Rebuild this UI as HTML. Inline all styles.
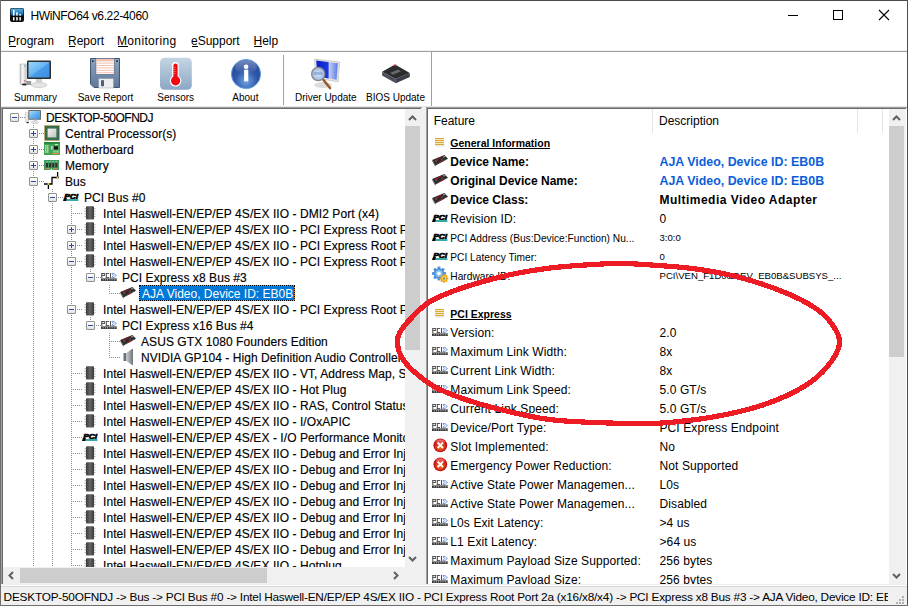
<!DOCTYPE html>
<html><head><meta charset="utf-8"><style>
html,body{margin:0;padding:0;}
body{width:908px;height:606px;overflow:hidden;position:relative;background:#fff;font-family:"Liberation Sans", sans-serif;}
.t{position:absolute;white-space:pre;font-family:"Liberation Sans", sans-serif;}
.r{position:absolute;}
svg.r{overflow:visible}
</style></head><body>
<div class="r" style="left:0px;top:0px;width:908px;height:606px;background:#fff"></div>
<svg class="r" style="left:10px;top:8px;" width="14" height="14" viewBox="0 0 14 14"><defs><linearGradient id="tg" x1="0" y1="0" x2="0" y2="1"><stop offset="0" stop-color="#5ab4e8"/><stop offset="1" stop-color="#0a5a98"/></linearGradient></defs>
<rect x="0" y="0" width="14" height="14" rx="2" fill="#0c0c0c"/>
<rect x="0.6" y="0.6" width="12.8" height="7" rx="1.5" fill="url(#tg)"/>
<rect x="3" y="2" width="1.5" height="5.6" fill="#fff"/><rect x="6.2" y="4.2" width="1.5" height="3.4" fill="#fff"/><rect x="9.4" y="5.8" width="1.5" height="1.8" fill="#fff"/>
<rect x="3" y="9" width="1.5" height="3.5" rx="0.5" fill="#fff"/><rect x="6.2" y="9" width="1.5" height="3.5" rx="0.5" fill="#fff"/><rect x="9.4" y="9" width="1.5" height="3.5" rx="0.5" fill="#fff"/></svg>
<div class="t" style="left:30.5px;top:8.03px;font-size:12px;line-height:16px;font-weight:normal;color:#000;letter-spacing:-0.38px">HWiNFO64 v6.22-4060</div>
<div class="r" style="left:788px;top:15px;width:10px;height:1px;background:#000"></div>
<div class="r" style="left:833px;top:10px;width:10px;height:10px;border:1px solid #000;box-sizing:border-box"></div>
<svg class="r" style="left:878px;top:9px;" width="12" height="12" viewBox="0 0 12 12"><path d="M1 1 L11 11 M11 1 L1 11" stroke="#000" stroke-width="1.1"/></svg>
<div class="t" style="left:8px;top:33.03px;font-size:12px;line-height:16px;font-weight:normal;color:#000;">Program</div>
<div class="r" style="left:8.5px;top:46px;width:7.5px;height:1px;background:#000"></div>
<div class="t" style="left:68px;top:33.03px;font-size:12px;line-height:16px;font-weight:normal;color:#000;">Report</div>
<div class="r" style="left:68.5px;top:46px;width:6.5px;height:1px;background:#000"></div>
<div class="t" style="left:117px;top:33.03px;font-size:12px;line-height:16px;font-weight:normal;color:#000;letter-spacing:0.35px">Monitoring</div>
<div class="r" style="left:117.5px;top:46px;width:10px;height:1px;background:#000"></div>
<div class="t" style="left:191px;top:33.03px;font-size:12px;line-height:16px;font-weight:normal;color:#000;">eSupport</div>
<div class="r" style="left:191.5px;top:46px;width:6.5px;height:1px;background:#000"></div>
<div class="t" style="left:253.5px;top:33.03px;font-size:12px;line-height:16px;font-weight:normal;color:#000;">Help</div>
<div class="r" style="left:254.0px;top:46px;width:7.5px;height:1px;background:#000"></div>
<div class="r" style="left:1px;top:50px;width:906px;height:1px;background:#f0f0f0"></div>
<div class="r" style="left:1px;top:51px;width:906px;height:1px;background:#a0a0a0"></div>
<div class="r" style="left:0px;top:0px;width:908px;height:1px;background:#4a4a4a"></div>
<div class="r" style="left:0px;top:0px;width:1px;height:606px;background:#6e6e6e"></div>
<div class="r" style="left:907px;top:0px;width:1px;height:606px;background:#4e4e52"></div>
<div class="r" style="left:0px;top:605px;width:908px;height:1px;background:#6e6e6e"></div>
<div class="r" style="left:1px;top:52px;width:906px;height:54px;background:#fff"></div>
<div class="r" style="left:283px;top:55px;width:1px;height:50px;background:#a0a0a0"></div>
<div class="r" style="left:431px;top:52px;width:1px;height:55px;background:#a0a0a0"></div>
<div class="t" style="left:-14.5px;width:100px;text-align:center;top:91.30px;font-size:10px;line-height:13px;color:#000">Summary</div>
<div class="t" style="left:55.5px;width:100px;text-align:center;top:91.30px;font-size:10px;line-height:13px;color:#000">Save Report</div>
<div class="t" style="left:125.69999999999999px;width:100px;text-align:center;top:91.30px;font-size:10px;line-height:13px;color:#000">Sensors</div>
<div class="t" style="left:195.4px;width:100px;text-align:center;top:91.30px;font-size:10px;line-height:13px;color:#000">About</div>
<div class="t" style="left:275.8px;width:100px;text-align:center;top:91.30px;font-size:10px;line-height:13px;color:#000">Driver Update</div>
<div class="t" style="left:345.5px;width:100px;text-align:center;top:91.30px;font-size:10px;line-height:13px;color:#000">BIOS Update</div>
<div class="r" style="left:1px;top:106px;width:906px;height:1px;background:#e4e4e4"></div>
<svg class="r" style="left:18px;top:56px;" width="36" height="34" viewBox="0 0 36 34"><defs>
<linearGradient id="sumscr" x1="0" y1="0" x2="1" y2="1"><stop offset="0" stop-color="#9ad6fb"/><stop offset="0.5" stop-color="#64b4f2"/><stop offset="0.52" stop-color="#4a9cea"/><stop offset="1" stop-color="#3b8ce0"/></linearGradient>
<linearGradient id="sumtw" x1="0" y1="0" x2="1" y2="0"><stop offset="0" stop-color="#bdbdbd"/><stop offset="0.4" stop-color="#f8f8f8"/><stop offset="1" stop-color="#c8c8c8"/></linearGradient>
</defs>
<rect x="2" y="8" width="6.2" height="20.2" fill="url(#sumtw)" stroke="#a8a8a8" stroke-width="0.5"/>
<ellipse cx="6.5" cy="28.5" rx="2.8" ry="1" fill="#222"/>
<rect x="6.5" y="9" width="0.8" height="2" fill="#40b0d0"/><rect x="6.5" y="24" width="0.8" height="2" fill="#d04040"/>
<rect x="8.2" y="25" width="5" height="4" fill="#9a9a9a"/>
<ellipse cx="21" cy="29" rx="7.8" ry="2.6" fill="#e4e4e4" stroke="#bdbdbd" stroke-width="0.6"/>
<rect x="18" y="22" width="6" height="5" fill="#d0d0d0"/>
<rect x="9" y="4.6" width="24" height="18.4" rx="0.8" fill="#2e2e2e"/>
<rect x="10.5" y="6" width="21" height="15.5" fill="url(#sumscr)"/></svg>
<svg class="r" style="left:88px;top:56px;" width="34" height="34" viewBox="0 0 34 34"><defs><linearGradient id="flb" x1="0" y1="0" x2="0" y2="1"><stop offset="0" stop-color="#8ea4c0"/><stop offset="1" stop-color="#5f7898"/></linearGradient></defs>
<path d="M2.5 2.5 H31.5 V31.5 H6 L2.5 28 Z" fill="url(#flb)" stroke="#3f5577" stroke-width="1"/>
<rect x="8" y="2.5" width="18.2" height="15.8" fill="#fff" stroke="#506480" stroke-width="0.6"/>
<g fill="#f4c2b0"><rect x="8.3" y="3" width="17.6" height="2.4"/><rect x="8.3" y="6.6" width="17.6" height="1"/><rect x="8.3" y="9" width="17.6" height="1"/><rect x="8.3" y="11.4" width="17.6" height="1"/><rect x="8.3" y="13.8" width="17.6" height="1"/><rect x="8.3" y="16.2" width="17.6" height="1"/></g>
<rect x="4" y="4.3" width="1.6" height="1.6" fill="#1a2430"/><rect x="28.2" y="4.3" width="1.6" height="1.6" fill="#1a2430"/>
<rect x="10.8" y="22.7" width="14.5" height="9.3" fill="#eeeeee" stroke="#9aa6b4" stroke-width="0.5"/>
<rect x="13" y="24.2" width="3" height="6" fill="#4a6088"/></svg>
<svg class="r" style="left:158px;top:56px;" width="36" height="36" viewBox="0 0 36 36"><defs><linearGradient id="sng" x1="0" y1="0" x2="0" y2="1"><stop offset="0" stop-color="#c6d5e3"/><stop offset="1" stop-color="#8ba8c6"/></linearGradient></defs>
<rect x="2" y="1.7" width="31.8" height="32" rx="4.5" fill="url(#sng)"/>
<rect x="14" y="6" width="6.8" height="19" rx="3.4" fill="#fff"/>
<circle cx="17.6" cy="24.8" r="5.8" fill="#fff"/>
<rect x="15.4" y="7.6" width="4.2" height="18" rx="2.1" fill="#ee0a10"/>
<circle cx="17.6" cy="24.8" r="4.6" fill="#ee0a10"/>
<g fill="#f87a7a"><rect x="16" y="11" width="1.5" height="0.8"/><rect x="16" y="13" width="1.5" height="0.8"/><rect x="16" y="15" width="1.5" height="0.8"/><rect x="16" y="17" width="1.5" height="0.8"/></g></svg>
<svg class="r" style="left:229px;top:57px;" width="34" height="34" viewBox="0 0 34 34"><defs><radialGradient id="abg" cx="0.5" cy="0.75" r="0.7"><stop offset="0" stop-color="#6ea6e6"/><stop offset="0.55" stop-color="#2f56a8"/><stop offset="1" stop-color="#2a4a9a"/></radialGradient>
<linearGradient id="abh" x1="0" y1="0" x2="0" y2="1"><stop offset="0" stop-color="#fff" stop-opacity="0.35"/><stop offset="1" stop-color="#fff" stop-opacity="0"/></linearGradient></defs>
<circle cx="17" cy="17" r="14.6" fill="url(#abg)" stroke="#5a9ee0" stroke-width="0.9"/>
<ellipse cx="17" cy="10" rx="11" ry="7" fill="url(#abh)"/>
<circle cx="17.1" cy="9.7" r="2.3" fill="#fff"/>
<rect x="15.1" y="12.7" width="4.2" height="11.6" fill="#fff"/></svg>
<svg class="r" style="left:304px;top:56px;" width="40" height="36" viewBox="0 0 40 36"><defs><linearGradient id="dus" x1="0" y1="0" x2="1" y2="0"><stop offset="0" stop-color="#0a1cc8"/><stop offset="0.55" stop-color="#1a3ae0"/><stop offset="0.6" stop-color="#c6d2f6"/><stop offset="1" stop-color="#5a78e8"/></linearGradient>
<radialGradient id="dul" cx="0.5" cy="0.5" r="0.5"><stop offset="0" stop-color="#dde8f8"/><stop offset="1" stop-color="#9cb8e0"/></radialGradient></defs>
<ellipse cx="19" cy="29" rx="9" ry="3" fill="#dcdcdc"/>
<path d="M10.5 3 L35.6 6 L34.2 25.8 L12 22.3 Z" fill="#e6e6de" stroke="#b8b8b0" stroke-width="0.6"/>
<path d="M12.2 4.6 L33.8 7.3 L32.6 23.8 L13.6 20.8 Z" fill="url(#dus)"/>
<path d="M19.5 24 L26 32" stroke="#9a5a28" stroke-width="2.6" stroke-linecap="round"/>
<circle cx="14.2" cy="18" r="6.6" fill="url(#dul)" stroke="#8a8a8a" stroke-width="1.3"/>
<rect x="9.5" y="16" width="9" height="3" fill="#7a9ad0" opacity="0.6"/></svg>
<svg class="r" style="left:380px;top:62px;" width="32" height="24" viewBox="0 0 32 24"><path d="M2.1 9.7 L15 2.6 L29.8 11 L15.8 17.1 Z" fill="#2c2c2e"/>
<path d="M2.1 9.7 L15.8 17.1 L15.8 21.3 L2.1 13.5 Z" fill="#4a4e58"/>
<path d="M15.8 17.1 L29.8 11 L29.8 15 L15.8 21.3 Z" fill="#3a3e48"/>
<circle cx="15" cy="3.6" r="1" fill="#d02020"/>
<path d="M10 11 L18 7.5 L21 9.2 L13 12.8 Z" fill="#6a6a6a"/></svg>
<div class="r" style="left:1px;top:107px;width:421px;height:1px;background:#a0a0a0"></div>
<div class="r" style="left:1px;top:107px;width:1px;height:478px;background:#a0a0a0"></div>
<div class="r" style="left:2px;top:108px;width:419px;height:1px;background:#6a6a6a"></div>
<div class="r" style="left:2px;top:108px;width:1px;height:477px;background:#6a6a6a"></div>
<div class="r" style="left:405px;top:109px;width:17px;height:458px;background:#f0f0f0"></div>
<div class="r" style="left:405px;top:126px;width:15px;height:224px;background:#cdcdcd"></div>
<svg class="r" style="left:408px;top:115px;" width="9" height="6" viewBox="0 0 9 6"><path d="M1 5 L4.5 1.5 L8 5" fill="none" stroke="#606060" stroke-width="2"/></svg>
<svg class="r" style="left:408px;top:556px;" width="9" height="6" viewBox="0 0 9 6"><path d="M1 1 L4.5 4.5 L8 1" fill="none" stroke="#606060" stroke-width="2"/></svg>
<div class="r" style="left:3px;top:567px;width:419px;height:18px;background:#f0f0f0"></div>
<div class="r" style="left:20px;top:568px;width:247px;height:15px;background:#cdcdcd"></div>
<svg class="r" style="left:8px;top:571px;" width="6" height="9" viewBox="0 0 6 9"><path d="M5 1 L1.5 4.5 L5 8" fill="none" stroke="#606060" stroke-width="2"/></svg>
<svg class="r" style="left:393px;top:571px;" width="6" height="9" viewBox="0 0 6 9"><path d="M1 1 L4.5 4.5 L1 8" fill="none" stroke="#606060" stroke-width="2"/></svg>
<div class="r" style="left:422px;top:107px;width:4px;height:478px;background:#f0f0f0"></div>
<div class="r" style="left:426px;top:107px;width:481px;height:1px;background:#a0a0a0"></div>
<div class="r" style="left:426px;top:107px;width:1px;height:478px;background:#a0a0a0"></div>
<div class="r" style="left:427px;top:108px;width:479px;height:1px;background:#6a6a6a"></div>
<div class="r" style="left:427px;top:108px;width:1px;height:477px;background:#6a6a6a"></div>
<div class="r" style="left:652px;top:109px;width:1px;height:24px;background:#e5e5e5"></div>
<div class="r" style="left:857px;top:109px;width:1px;height:24px;background:#e5e5e5"></div>
<div class="r" style="left:882px;top:109px;width:1px;height:24px;background:#e5e5e5"></div>
<div class="t" style="left:433.7px;top:113.03px;font-size:12px;line-height:16px;font-weight:normal;color:#000;">Feature</div>
<div class="t" style="left:659px;top:113.03px;font-size:12px;line-height:16px;font-weight:normal;color:#000;">Description</div>
<div class="r" style="left:889px;top:109px;width:17px;height:476px;background:#f0f0f0"></div>
<div class="r" style="left:889px;top:126px;width:15px;height:231px;background:#cdcdcd"></div>
<svg class="r" style="left:892px;top:115px;" width="9" height="6" viewBox="0 0 9 6"><path d="M1 5 L4.5 1.5 L8 5" fill="none" stroke="#606060" stroke-width="2"/></svg>
<svg class="r" style="left:892px;top:573px;" width="9" height="6" viewBox="0 0 9 6"><path d="M1 1 L4.5 4.5 L8 1" fill="none" stroke="#606060" stroke-width="2"/></svg>
<div class="r" style="left:3px;top:109px;width:402px;height:458px;overflow:hidden;background:#fff">
<div class="r" style="left:30px;top:14px;width:1px;height:444px;background:repeating-linear-gradient(to bottom,#8a8a8a 0 1px,transparent 1px 2px)"></div>
<div class="r" style="left:49px;top:80px;width:1px;height:378px;background:repeating-linear-gradient(to bottom,#8a8a8a 0 1px,transparent 1px 2px)"></div>
<div class="r" style="left:68px;top:96px;width:1px;height:362px;background:repeating-linear-gradient(to bottom,#8a8a8a 0 1px,transparent 1px 2px)"></div>
<div class="r" style="left:87px;top:160px;width:1px;height:8px;background:repeating-linear-gradient(to bottom,#8a8a8a 0 1px,transparent 1px 2px)"></div>
<div class="r" style="left:106px;top:176px;width:1px;height:8px;background:repeating-linear-gradient(to bottom,#8a8a8a 0 1px,transparent 1px 2px)"></div>
<div class="r" style="left:87px;top:208px;width:1px;height:8px;background:repeating-linear-gradient(to bottom,#8a8a8a 0 1px,transparent 1px 2px)"></div>
<div class="r" style="left:106px;top:224px;width:1px;height:24px;background:repeating-linear-gradient(to bottom,#8a8a8a 0 1px,transparent 1px 2px)"></div>
<div class="r" style="left:11px;top:8px;width:11px;height:1px;background:repeating-linear-gradient(to right,#8a8a8a 0 1px,transparent 1px 2px)"></div>
<div class="r" style="left:7px;top:4px;width:9px;height:9px;border:1px solid #919191;border-radius:1px;box-sizing:border-box;background:linear-gradient(#fff,#e4e4e4)"></div>
<div class="r" style="left:9px;top:8px;width:5px;height:1px;background:#2d4ba0"></div>
<svg class="r" style="left:22px;top:1px;" width="16" height="16" viewBox="0 0 16 16"><defs><linearGradient id="cscr" x1="0" y1="0" x2="1" y2="1"><stop offset="0" stop-color="#a6e0fb"/><stop offset="0.5" stop-color="#62b2f0"/><stop offset="1" stop-color="#3a8ee6"/></linearGradient>
<linearGradient id="ctw" x1="0" y1="0" x2="1" y2="0"><stop offset="0" stop-color="#c8c8c8"/><stop offset="0.5" stop-color="#f6f6f6"/><stop offset="1" stop-color="#b8b8b8"/></linearGradient></defs>
<rect x="0.2" y="2" width="3.6" height="10" fill="url(#ctw)"/><ellipse cx="2.6" cy="12.6" rx="1.6" ry="0.7" fill="#222"/>
<rect x="3.4" y="0" width="12.6" height="9.8" rx="0.6" fill="#6e6660"/><rect x="4.3" y="1" width="10.8" height="7.9" fill="url(#cscr)"/>
<rect x="8.5" y="9.8" width="3.5" height="1.6" fill="#d0d0d0"/><ellipse cx="9.8" cy="12.4" rx="3.8" ry="1.3" fill="#e2e2e2" stroke="#c4c4c4" stroke-width="0.5"/></svg>
<div class="t" style="left:43px;top:1.03px;font-size:12px;line-height:16px;font-weight:normal;color:#000;letter-spacing:-0.5px;-webkit-text-stroke:0.15px #000">DESKTOP-50OFNDJ</div>
<div class="r" style="left:30px;top:24px;width:11px;height:1px;background:repeating-linear-gradient(to right,#8a8a8a 0 1px,transparent 1px 2px)"></div>
<div class="r" style="left:26px;top:20px;width:9px;height:9px;border:1px solid #919191;border-radius:1px;box-sizing:border-box;background:linear-gradient(#fff,#e4e4e4)"></div>
<div class="r" style="left:28px;top:24px;width:5px;height:1px;background:#2d4ba0"></div>
<div class="r" style="left:30px;top:22px;width:1px;height:5px;background:#2d4ba0"></div>
<svg class="r" style="left:41px;top:16px;" width="16" height="16" viewBox="0 0 16 16"><rect x="0.5" y="0.5" width="15" height="15" fill="#2f6446"/>
<rect x="0.5" y="0.5" width="15" height="15" fill="none" stroke="#e4a640" stroke-width="1" stroke-dasharray="1 1"/>
<rect x="1.5" y="1.5" width="13" height="13" fill="#3a6e50"/>
<defs><linearGradient id="cpug" x1="0" y1="0" x2="1" y2="1"><stop offset="0" stop-color="#f6f6f6"/><stop offset="1" stop-color="#c0c0c0"/></linearGradient></defs>
<rect x="3.6" y="3.6" width="8.8" height="8.8" fill="url(#cpug)"/></svg>
<div class="t" style="left:62px;top:17.03px;font-size:12px;line-height:16px;font-weight:normal;color:#000;letter-spacing:0.07px;-webkit-text-stroke:0.15px #000">Central Processor(s)</div>
<div class="r" style="left:30px;top:40px;width:11px;height:1px;background:repeating-linear-gradient(to right,#8a8a8a 0 1px,transparent 1px 2px)"></div>
<div class="r" style="left:26px;top:36px;width:9px;height:9px;border:1px solid #919191;border-radius:1px;box-sizing:border-box;background:linear-gradient(#fff,#e4e4e4)"></div>
<div class="r" style="left:28px;top:40px;width:5px;height:1px;background:#2d4ba0"></div>
<div class="r" style="left:30px;top:38px;width:1px;height:5px;background:#2d4ba0"></div>
<svg class="r" style="left:41px;top:33px;" width="16" height="14" viewBox="0 0 16 14"><rect x="0" y="0" width="16" height="13" fill="#40a452"/><rect x="0" y="0" width="16" height="2" fill="#2a8a40"/>
<rect x="1.4" y="3" width="0.9" height="8" fill="#e8eee8"/><rect x="3.4" y="3" width="0.9" height="8" fill="#e8eee8"/>
<rect x="7" y="4" width="1.6" height="3.6" fill="#e8c8d8"/>
<rect x="10" y="4.4" width="4" height="3" fill="#111"/><rect x="11" y="2" width="3" height="1" fill="#c8e8c8"/>
<rect x="9" y="8.5" width="6" height="2.2" fill="#7ccf8c"/><rect x="8" y="11" width="7.5" height="1.2" fill="#e08a48"/></svg>
<div class="t" style="left:62px;top:33.03px;font-size:12px;line-height:16px;font-weight:normal;color:#000;letter-spacing:0.07px;-webkit-text-stroke:0.15px #000">Motherboard</div>
<div class="r" style="left:30px;top:56px;width:11px;height:1px;background:repeating-linear-gradient(to right,#8a8a8a 0 1px,transparent 1px 2px)"></div>
<div class="r" style="left:26px;top:52px;width:9px;height:9px;border:1px solid #919191;border-radius:1px;box-sizing:border-box;background:linear-gradient(#fff,#e4e4e4)"></div>
<div class="r" style="left:28px;top:56px;width:5px;height:1px;background:#2d4ba0"></div>
<div class="r" style="left:30px;top:54px;width:1px;height:5px;background:#2d4ba0"></div>
<svg class="r" style="left:41px;top:51px;" width="16" height="11" viewBox="0 0 16 11"><rect x="0" y="0" width="15" height="10" fill="#3c9c5e"/>
<g fill="#3a2c2c"><rect x="2" y="3" width="2" height="4.4"/><rect x="5.1" y="3" width="2" height="4.4"/><rect x="8.2" y="3" width="2" height="4.4"/><rect x="11.3" y="3" width="2" height="4.4"/></g>
<g fill="#b8d8b8"><rect x="2.2" y="1.3" width="1.6" height="0.9"/><rect x="5.3" y="1.3" width="1.6" height="0.9"/><rect x="8.4" y="1.3" width="1.6" height="0.9"/><rect x="11.5" y="1.3" width="1.6" height="0.9"/></g>
<rect x="1.5" y="8.2" width="4.5" height="1" fill="#e09040"/><rect x="9" y="8.2" width="4.5" height="1" fill="#e09040"/><rect x="6.8" y="8.8" width="1.4" height="1.4" fill="#fff"/></svg>
<div class="t" style="left:62px;top:49.03px;font-size:12px;line-height:16px;font-weight:normal;color:#000;letter-spacing:0.07px;-webkit-text-stroke:0.15px #000">Memory</div>
<div class="r" style="left:30px;top:72px;width:11px;height:1px;background:repeating-linear-gradient(to right,#8a8a8a 0 1px,transparent 1px 2px)"></div>
<div class="r" style="left:26px;top:68px;width:9px;height:9px;border:1px solid #919191;border-radius:1px;box-sizing:border-box;background:linear-gradient(#fff,#e4e4e4)"></div>
<div class="r" style="left:28px;top:72px;width:5px;height:1px;background:#2d4ba0"></div>
<svg class="r" style="left:41px;top:63px;" width="16" height="17" viewBox="0 0 16 17"><path d="M0 12 H8 V5.5 H15 M13.6 0 V5.5 M4.4 12 V17" fill="none" stroke="#000" stroke-width="1.3"/>
<circle cx="4.4" cy="12" r="1" fill="#f0e020"/><circle cx="13.6" cy="5.5" r="1" fill="#f0e020"/></svg>
<div class="t" style="left:62px;top:65.03px;font-size:12px;line-height:16px;font-weight:normal;color:#000;letter-spacing:0.07px;-webkit-text-stroke:0.15px #000">Bus</div>
<div class="r" style="left:49px;top:88px;width:11px;height:1px;background:repeating-linear-gradient(to right,#8a8a8a 0 1px,transparent 1px 2px)"></div>
<div class="r" style="left:45px;top:84px;width:9px;height:9px;border:1px solid #919191;border-radius:1px;box-sizing:border-box;background:linear-gradient(#fff,#e4e4e4)"></div>
<div class="r" style="left:47px;top:88px;width:5px;height:1px;background:#2d4ba0"></div>
<svg class="r" style="left:60px;top:84px;" width="16" height="8" viewBox="0 0 16 8"><text x="1.2" y="5.6" font-family="Liberation Sans" font-weight="bold" font-style="italic" font-size="7.8" fill="#000" stroke="#000" stroke-width="0.7" textLength="14" lengthAdjust="spacingAndGlyphs">PCI</text>
<rect x="3.4" y="6" width="12" height="2" fill="#3aa8a8"/><path d="M0 8 L1 5 L3.8 5 L3.4 8 Z" fill="#000"/></svg>
<div class="t" style="left:81px;top:81.03px;font-size:12px;line-height:16px;font-weight:normal;color:#000;letter-spacing:0.07px;-webkit-text-stroke:0.15px #000">PCI Bus #0</div>
<div class="r" style="left:68px;top:104px;width:11px;height:1px;background:repeating-linear-gradient(to right,#8a8a8a 0 1px,transparent 1px 2px)"></div>
<svg class="r" style="left:79px;top:97px;" width="16" height="14" viewBox="0 0 16 14"><defs><linearGradient id="chg" x1="0" y1="0" x2="1" y2="0"><stop offset="0" stop-color="#3c3c3c"/><stop offset="0.5" stop-color="#666"/><stop offset="1" stop-color="#3a3a3a"/></linearGradient></defs>
<rect x="2.5" y="2" width="2" height="1.3" fill="#bbb"/><rect x="2.5" y="4.6" width="2" height="1.3" fill="#bbb"/><rect x="2.5" y="7.2" width="2" height="1.3" fill="#bbb"/><rect x="2.5" y="9.8" width="2" height="1.3" fill="#bbb"/>
<rect x="11.5" y="2" width="2" height="1.3" fill="#bbb"/><rect x="11.5" y="4.6" width="2" height="1.3" fill="#bbb"/><rect x="11.5" y="7.2" width="2" height="1.3" fill="#bbb"/><rect x="11.5" y="9.8" width="2" height="1.3" fill="#bbb"/>
<rect x="4" y="0.3" width="8" height="13.2" rx="1" fill="url(#chg)"/></svg>
<div class="t" style="left:100px;top:97.03px;font-size:12px;line-height:16px;font-weight:normal;color:#000;letter-spacing:0.07px;-webkit-text-stroke:0.15px #000">Intel Haswell-EN/EP/EP 4S/EX IIO - DMI2 Port (x4)</div>
<div class="r" style="left:68px;top:120px;width:11px;height:1px;background:repeating-linear-gradient(to right,#8a8a8a 0 1px,transparent 1px 2px)"></div>
<div class="r" style="left:64px;top:116px;width:9px;height:9px;border:1px solid #919191;border-radius:1px;box-sizing:border-box;background:linear-gradient(#fff,#e4e4e4)"></div>
<div class="r" style="left:66px;top:120px;width:5px;height:1px;background:#2d4ba0"></div>
<div class="r" style="left:68px;top:118px;width:1px;height:5px;background:#2d4ba0"></div>
<svg class="r" style="left:79px;top:113px;" width="16" height="14" viewBox="0 0 16 14"><defs><linearGradient id="chg" x1="0" y1="0" x2="1" y2="0"><stop offset="0" stop-color="#3c3c3c"/><stop offset="0.5" stop-color="#666"/><stop offset="1" stop-color="#3a3a3a"/></linearGradient></defs>
<rect x="2.5" y="2" width="2" height="1.3" fill="#bbb"/><rect x="2.5" y="4.6" width="2" height="1.3" fill="#bbb"/><rect x="2.5" y="7.2" width="2" height="1.3" fill="#bbb"/><rect x="2.5" y="9.8" width="2" height="1.3" fill="#bbb"/>
<rect x="11.5" y="2" width="2" height="1.3" fill="#bbb"/><rect x="11.5" y="4.6" width="2" height="1.3" fill="#bbb"/><rect x="11.5" y="7.2" width="2" height="1.3" fill="#bbb"/><rect x="11.5" y="9.8" width="2" height="1.3" fill="#bbb"/>
<rect x="4" y="0.3" width="8" height="13.2" rx="1" fill="url(#chg)"/></svg>
<div class="t" style="left:100px;top:113.03px;font-size:12px;line-height:16px;font-weight:normal;color:#000;letter-spacing:0.07px;-webkit-text-stroke:0.15px #000">Intel Haswell-EN/EP/EP 4S/EX IIO - PCI Express Root Port 2a (x16/x8/x4)</div>
<div class="r" style="left:68px;top:136px;width:11px;height:1px;background:repeating-linear-gradient(to right,#8a8a8a 0 1px,transparent 1px 2px)"></div>
<div class="r" style="left:64px;top:132px;width:9px;height:9px;border:1px solid #919191;border-radius:1px;box-sizing:border-box;background:linear-gradient(#fff,#e4e4e4)"></div>
<div class="r" style="left:66px;top:136px;width:5px;height:1px;background:#2d4ba0"></div>
<div class="r" style="left:68px;top:134px;width:1px;height:5px;background:#2d4ba0"></div>
<svg class="r" style="left:79px;top:129px;" width="16" height="14" viewBox="0 0 16 14"><defs><linearGradient id="chg" x1="0" y1="0" x2="1" y2="0"><stop offset="0" stop-color="#3c3c3c"/><stop offset="0.5" stop-color="#666"/><stop offset="1" stop-color="#3a3a3a"/></linearGradient></defs>
<rect x="2.5" y="2" width="2" height="1.3" fill="#bbb"/><rect x="2.5" y="4.6" width="2" height="1.3" fill="#bbb"/><rect x="2.5" y="7.2" width="2" height="1.3" fill="#bbb"/><rect x="2.5" y="9.8" width="2" height="1.3" fill="#bbb"/>
<rect x="11.5" y="2" width="2" height="1.3" fill="#bbb"/><rect x="11.5" y="4.6" width="2" height="1.3" fill="#bbb"/><rect x="11.5" y="7.2" width="2" height="1.3" fill="#bbb"/><rect x="11.5" y="9.8" width="2" height="1.3" fill="#bbb"/>
<rect x="4" y="0.3" width="8" height="13.2" rx="1" fill="url(#chg)"/></svg>
<div class="t" style="left:100px;top:129.03px;font-size:12px;line-height:16px;font-weight:normal;color:#000;letter-spacing:0.07px;-webkit-text-stroke:0.15px #000">Intel Haswell-EN/EP/EP 4S/EX IIO - PCI Express Root Port 2b</div>
<div class="r" style="left:68px;top:152px;width:11px;height:1px;background:repeating-linear-gradient(to right,#8a8a8a 0 1px,transparent 1px 2px)"></div>
<div class="r" style="left:64px;top:148px;width:9px;height:9px;border:1px solid #919191;border-radius:1px;box-sizing:border-box;background:linear-gradient(#fff,#e4e4e4)"></div>
<div class="r" style="left:66px;top:152px;width:5px;height:1px;background:#2d4ba0"></div>
<svg class="r" style="left:79px;top:145px;" width="16" height="14" viewBox="0 0 16 14"><defs><linearGradient id="chg" x1="0" y1="0" x2="1" y2="0"><stop offset="0" stop-color="#3c3c3c"/><stop offset="0.5" stop-color="#666"/><stop offset="1" stop-color="#3a3a3a"/></linearGradient></defs>
<rect x="2.5" y="2" width="2" height="1.3" fill="#bbb"/><rect x="2.5" y="4.6" width="2" height="1.3" fill="#bbb"/><rect x="2.5" y="7.2" width="2" height="1.3" fill="#bbb"/><rect x="2.5" y="9.8" width="2" height="1.3" fill="#bbb"/>
<rect x="11.5" y="2" width="2" height="1.3" fill="#bbb"/><rect x="11.5" y="4.6" width="2" height="1.3" fill="#bbb"/><rect x="11.5" y="7.2" width="2" height="1.3" fill="#bbb"/><rect x="11.5" y="9.8" width="2" height="1.3" fill="#bbb"/>
<rect x="4" y="0.3" width="8" height="13.2" rx="1" fill="url(#chg)"/></svg>
<div class="t" style="left:100px;top:145.03px;font-size:12px;line-height:16px;font-weight:normal;color:#000;letter-spacing:0.07px;-webkit-text-stroke:0.15px #000">Intel Haswell-EN/EP/EP 4S/EX IIO - PCI Express Root Port 2a (x16/x8/x4)</div>
<div class="r" style="left:87px;top:168px;width:11px;height:1px;background:repeating-linear-gradient(to right,#8a8a8a 0 1px,transparent 1px 2px)"></div>
<div class="r" style="left:83px;top:164px;width:9px;height:9px;border:1px solid #919191;border-radius:1px;box-sizing:border-box;background:linear-gradient(#fff,#e4e4e4)"></div>
<div class="r" style="left:85px;top:168px;width:5px;height:1px;background:#2d4ba0"></div>
<svg class="r" style="left:98px;top:164px;" width="16" height="8" viewBox="0 0 16 8"><rect x="0.3" y="0" width="1" height="5" fill="#4a4a4a"/><rect x="0.3" y="0" width="3.3" height="0.9" fill="#4a4a4a"/><rect x="0.3" y="2.1" width="3.3" height="0.9" fill="#4a4a4a"/><rect x="2.9" y="0" width="0.9" height="3" fill="#4a4a4a"/><rect x="4.8" y="0" width="3.3" height="0.9" fill="#4a4a4a"/><rect x="4.8" y="4.1" width="3.3" height="0.9" fill="#4a4a4a"/><rect x="4.8" y="0" width="1" height="5" fill="#4a4a4a"/><rect x="9" y="0" width="1" height="5" fill="#4a4a4a"/><rect x="0" y="5.4" width="16" height="2.6" fill="#3a3a3a"/><rect x="1.8" y="5.9" width="0.7" height="1.6" fill="#c8c8c8"/><rect x="4.1" y="5.9" width="0.7" height="1.6" fill="#c8c8c8"/><rect x="6.3" y="5.9" width="0.7" height="1.6" fill="#c8c8c8"/><rect x="8.5" y="5.9" width="0.7" height="1.6" fill="#c8c8c8"/><rect x="10.7" y="5.9" width="0.7" height="1.6" fill="#c8c8c8"/><rect x="12.9" y="5.9" width="0.7" height="1.6" fill="#c8c8c8"/><rect x="14.8" y="5.9" width="0.7" height="1.6" fill="#c8c8c8"/><path d="M10.9 0.5 H13 L15.5 2.5 L13 4.5 H10.9 L12.3 2.5 Z" fill="#eef3fa" stroke="#6a90d4" stroke-width="0.85"/></svg>
<div class="t" style="left:119px;top:161.03px;font-size:12px;line-height:16px;font-weight:normal;color:#000;letter-spacing:0.07px;-webkit-text-stroke:0.15px #000">PCI Express x8 Bus #3</div>
<div class="r" style="left:106px;top:184px;width:11px;height:1px;background:repeating-linear-gradient(to right,#8a8a8a 0 1px,transparent 1px 2px)"></div>
<svg class="r" style="left:117px;top:178px;" width="17" height="12" viewBox="0 0 17 12"><path d="M0.2 5 L12.4 0 L16 3.8 L3.6 10.6 Z" fill="#2a2a2a"/>
<path d="M0.2 5 L3.6 10.6 L3.4 11.8 L0.6 7 Z" fill="#4a4a4a"/>
<path d="M2.6 5.3 L5.6 4.1 L6.3 5 L3.3 6.3 Z" fill="#c81828"/><path d="M6 3 L8.6 1.9 L9.3 2.8 L6.7 3.9 Z" fill="#b01020"/>
<path d="M7.4 7.2 L11 5.4 L11.7 6.2 L8.1 8 Z" fill="#c81828"/><path d="M10.8 1.6 L13 0.8 L13.6 1.8 L11.4 2.7 Z" fill="#9a9a9a"/>
<path d="M3.5 6.8 L5 6.1 M9 4.5 L11 3.7" stroke="#777" stroke-width="0.7"/>
<path d="M4.5 9 L14 4" stroke="#555" stroke-width="0.5"/></svg>
<div class="r" style="left:136px;top:176px;width:156px;height:16px;background:#0078d7"></div>
<div class="r" style="left:136px;top:176px;width:156px;height:16px;border:1px solid #ff8a28;box-sizing:border-box"></div>
<div class="r" style="left:136px;top:176px;width:156px;height:16px;border:1px dotted #000;box-sizing:border-box"></div>
<div class="t" style="left:139px;top:177.03px;font-size:12px;line-height:16px;font-weight:normal;color:#fff;">AJA Video, Device ID: EB0B</div>
<div class="r" style="left:68px;top:200px;width:11px;height:1px;background:repeating-linear-gradient(to right,#8a8a8a 0 1px,transparent 1px 2px)"></div>
<div class="r" style="left:64px;top:196px;width:9px;height:9px;border:1px solid #919191;border-radius:1px;box-sizing:border-box;background:linear-gradient(#fff,#e4e4e4)"></div>
<div class="r" style="left:66px;top:200px;width:5px;height:1px;background:#2d4ba0"></div>
<svg class="r" style="left:79px;top:193px;" width="16" height="14" viewBox="0 0 16 14"><defs><linearGradient id="chg" x1="0" y1="0" x2="1" y2="0"><stop offset="0" stop-color="#3c3c3c"/><stop offset="0.5" stop-color="#666"/><stop offset="1" stop-color="#3a3a3a"/></linearGradient></defs>
<rect x="2.5" y="2" width="2" height="1.3" fill="#bbb"/><rect x="2.5" y="4.6" width="2" height="1.3" fill="#bbb"/><rect x="2.5" y="7.2" width="2" height="1.3" fill="#bbb"/><rect x="2.5" y="9.8" width="2" height="1.3" fill="#bbb"/>
<rect x="11.5" y="2" width="2" height="1.3" fill="#bbb"/><rect x="11.5" y="4.6" width="2" height="1.3" fill="#bbb"/><rect x="11.5" y="7.2" width="2" height="1.3" fill="#bbb"/><rect x="11.5" y="9.8" width="2" height="1.3" fill="#bbb"/>
<rect x="4" y="0.3" width="8" height="13.2" rx="1" fill="url(#chg)"/></svg>
<div class="t" style="left:100px;top:193.03px;font-size:12px;line-height:16px;font-weight:normal;color:#000;letter-spacing:0.07px;-webkit-text-stroke:0.15px #000">Intel Haswell-EN/EP/EP 4S/EX IIO - PCI Express Root Port 3a (x16/x8/x4)</div>
<div class="r" style="left:87px;top:216px;width:11px;height:1px;background:repeating-linear-gradient(to right,#8a8a8a 0 1px,transparent 1px 2px)"></div>
<div class="r" style="left:83px;top:212px;width:9px;height:9px;border:1px solid #919191;border-radius:1px;box-sizing:border-box;background:linear-gradient(#fff,#e4e4e4)"></div>
<div class="r" style="left:85px;top:216px;width:5px;height:1px;background:#2d4ba0"></div>
<svg class="r" style="left:98px;top:212px;" width="16" height="8" viewBox="0 0 16 8"><rect x="0.3" y="0" width="1" height="5" fill="#4a4a4a"/><rect x="0.3" y="0" width="3.3" height="0.9" fill="#4a4a4a"/><rect x="0.3" y="2.1" width="3.3" height="0.9" fill="#4a4a4a"/><rect x="2.9" y="0" width="0.9" height="3" fill="#4a4a4a"/><rect x="4.8" y="0" width="3.3" height="0.9" fill="#4a4a4a"/><rect x="4.8" y="4.1" width="3.3" height="0.9" fill="#4a4a4a"/><rect x="4.8" y="0" width="1" height="5" fill="#4a4a4a"/><rect x="9" y="0" width="1" height="5" fill="#4a4a4a"/><rect x="0" y="5.4" width="16" height="2.6" fill="#3a3a3a"/><rect x="1.8" y="5.9" width="0.7" height="1.6" fill="#c8c8c8"/><rect x="4.1" y="5.9" width="0.7" height="1.6" fill="#c8c8c8"/><rect x="6.3" y="5.9" width="0.7" height="1.6" fill="#c8c8c8"/><rect x="8.5" y="5.9" width="0.7" height="1.6" fill="#c8c8c8"/><rect x="10.7" y="5.9" width="0.7" height="1.6" fill="#c8c8c8"/><rect x="12.9" y="5.9" width="0.7" height="1.6" fill="#c8c8c8"/><rect x="14.8" y="5.9" width="0.7" height="1.6" fill="#c8c8c8"/><path d="M10.9 0.5 H13 L15.5 2.5 L13 4.5 H10.9 L12.3 2.5 Z" fill="#eef3fa" stroke="#6a90d4" stroke-width="0.85"/></svg>
<div class="t" style="left:119px;top:209.03px;font-size:12px;line-height:16px;font-weight:normal;color:#000;letter-spacing:0.07px;-webkit-text-stroke:0.15px #000">PCI Express x16 Bus #4</div>
<div class="r" style="left:106px;top:232px;width:11px;height:1px;background:repeating-linear-gradient(to right,#8a8a8a 0 1px,transparent 1px 2px)"></div>
<svg class="r" style="left:117px;top:226px;" width="17" height="12" viewBox="0 0 17 12"><path d="M0.2 5 L12.4 0 L16 3.8 L3.6 10.6 Z" fill="#2a2a2a"/>
<path d="M0.2 5 L3.6 10.6 L3.4 11.8 L0.6 7 Z" fill="#4a4a4a"/>
<path d="M2.6 5.3 L5.6 4.1 L6.3 5 L3.3 6.3 Z" fill="#c81828"/><path d="M6 3 L8.6 1.9 L9.3 2.8 L6.7 3.9 Z" fill="#b01020"/>
<path d="M7.4 7.2 L11 5.4 L11.7 6.2 L8.1 8 Z" fill="#c81828"/><path d="M10.8 1.6 L13 0.8 L13.6 1.8 L11.4 2.7 Z" fill="#9a9a9a"/>
<path d="M3.5 6.8 L5 6.1 M9 4.5 L11 3.7" stroke="#777" stroke-width="0.7"/>
<path d="M4.5 9 L14 4" stroke="#555" stroke-width="0.5"/></svg>
<div class="t" style="left:138px;top:225.03px;font-size:12px;line-height:16px;font-weight:normal;color:#000;letter-spacing:0.07px;-webkit-text-stroke:0.15px #000">ASUS GTX 1080 Founders Edition</div>
<div class="r" style="left:106px;top:248px;width:11px;height:1px;background:repeating-linear-gradient(to right,#8a8a8a 0 1px,transparent 1px 2px)"></div>
<svg class="r" style="left:120px;top:240px;" width="10" height="16" viewBox="0 0 10 16"><defs><linearGradient id="spg" x1="0" y1="0" x2="1" y2="0"><stop offset="0" stop-color="#c8ccd0"/><stop offset="1" stop-color="#70757a"/></linearGradient></defs>
<rect x="0.5" y="4" width="3" height="8" fill="#6b7580"/><path d="M3.5 4 L9 0 L10 0 L10 16 L9 16 L3.5 12 Z" fill="url(#spg)"/></svg>
<div class="t" style="left:138px;top:241.03px;font-size:12px;line-height:16px;font-weight:normal;color:#000;letter-spacing:0.07px;-webkit-text-stroke:0.15px #000">NVIDIA GP104 - High Definition Audio Controller</div>
<div class="r" style="left:68px;top:264px;width:11px;height:1px;background:repeating-linear-gradient(to right,#8a8a8a 0 1px,transparent 1px 2px)"></div>
<svg class="r" style="left:79px;top:257px;" width="16" height="14" viewBox="0 0 16 14"><defs><linearGradient id="chg" x1="0" y1="0" x2="1" y2="0"><stop offset="0" stop-color="#3c3c3c"/><stop offset="0.5" stop-color="#666"/><stop offset="1" stop-color="#3a3a3a"/></linearGradient></defs>
<rect x="2.5" y="2" width="2" height="1.3" fill="#bbb"/><rect x="2.5" y="4.6" width="2" height="1.3" fill="#bbb"/><rect x="2.5" y="7.2" width="2" height="1.3" fill="#bbb"/><rect x="2.5" y="9.8" width="2" height="1.3" fill="#bbb"/>
<rect x="11.5" y="2" width="2" height="1.3" fill="#bbb"/><rect x="11.5" y="4.6" width="2" height="1.3" fill="#bbb"/><rect x="11.5" y="7.2" width="2" height="1.3" fill="#bbb"/><rect x="11.5" y="9.8" width="2" height="1.3" fill="#bbb"/>
<rect x="4" y="0.3" width="8" height="13.2" rx="1" fill="url(#chg)"/></svg>
<div class="t" style="left:100px;top:257.03px;font-size:12px;line-height:16px;font-weight:normal;color:#000;letter-spacing:0.07px;-webkit-text-stroke:0.15px #000">Intel Haswell-EN/EP/EP 4S/EX IIO - VT, Address Map, System Control</div>
<div class="r" style="left:68px;top:280px;width:11px;height:1px;background:repeating-linear-gradient(to right,#8a8a8a 0 1px,transparent 1px 2px)"></div>
<svg class="r" style="left:79px;top:273px;" width="16" height="14" viewBox="0 0 16 14"><defs><linearGradient id="chg" x1="0" y1="0" x2="1" y2="0"><stop offset="0" stop-color="#3c3c3c"/><stop offset="0.5" stop-color="#666"/><stop offset="1" stop-color="#3a3a3a"/></linearGradient></defs>
<rect x="2.5" y="2" width="2" height="1.3" fill="#bbb"/><rect x="2.5" y="4.6" width="2" height="1.3" fill="#bbb"/><rect x="2.5" y="7.2" width="2" height="1.3" fill="#bbb"/><rect x="2.5" y="9.8" width="2" height="1.3" fill="#bbb"/>
<rect x="11.5" y="2" width="2" height="1.3" fill="#bbb"/><rect x="11.5" y="4.6" width="2" height="1.3" fill="#bbb"/><rect x="11.5" y="7.2" width="2" height="1.3" fill="#bbb"/><rect x="11.5" y="9.8" width="2" height="1.3" fill="#bbb"/>
<rect x="4" y="0.3" width="8" height="13.2" rx="1" fill="url(#chg)"/></svg>
<div class="t" style="left:100px;top:273.03px;font-size:12px;line-height:16px;font-weight:normal;color:#000;letter-spacing:0.07px;-webkit-text-stroke:0.15px #000">Intel Haswell-EN/EP/EP 4S/EX IIO - Hot Plug</div>
<div class="r" style="left:68px;top:296px;width:11px;height:1px;background:repeating-linear-gradient(to right,#8a8a8a 0 1px,transparent 1px 2px)"></div>
<svg class="r" style="left:79px;top:289px;" width="16" height="14" viewBox="0 0 16 14"><defs><linearGradient id="chg" x1="0" y1="0" x2="1" y2="0"><stop offset="0" stop-color="#3c3c3c"/><stop offset="0.5" stop-color="#666"/><stop offset="1" stop-color="#3a3a3a"/></linearGradient></defs>
<rect x="2.5" y="2" width="2" height="1.3" fill="#bbb"/><rect x="2.5" y="4.6" width="2" height="1.3" fill="#bbb"/><rect x="2.5" y="7.2" width="2" height="1.3" fill="#bbb"/><rect x="2.5" y="9.8" width="2" height="1.3" fill="#bbb"/>
<rect x="11.5" y="2" width="2" height="1.3" fill="#bbb"/><rect x="11.5" y="4.6" width="2" height="1.3" fill="#bbb"/><rect x="11.5" y="7.2" width="2" height="1.3" fill="#bbb"/><rect x="11.5" y="9.8" width="2" height="1.3" fill="#bbb"/>
<rect x="4" y="0.3" width="8" height="13.2" rx="1" fill="url(#chg)"/></svg>
<div class="t" style="left:100px;top:289.03px;font-size:12px;line-height:16px;font-weight:normal;color:#000;letter-spacing:0.07px;-webkit-text-stroke:0.15px #000">Intel Haswell-EN/EP/EP 4S/EX IIO - RAS, Control Status and Global Errors</div>
<div class="r" style="left:68px;top:312px;width:11px;height:1px;background:repeating-linear-gradient(to right,#8a8a8a 0 1px,transparent 1px 2px)"></div>
<svg class="r" style="left:79px;top:305px;" width="16" height="14" viewBox="0 0 16 14"><defs><linearGradient id="chg" x1="0" y1="0" x2="1" y2="0"><stop offset="0" stop-color="#3c3c3c"/><stop offset="0.5" stop-color="#666"/><stop offset="1" stop-color="#3a3a3a"/></linearGradient></defs>
<rect x="2.5" y="2" width="2" height="1.3" fill="#bbb"/><rect x="2.5" y="4.6" width="2" height="1.3" fill="#bbb"/><rect x="2.5" y="7.2" width="2" height="1.3" fill="#bbb"/><rect x="2.5" y="9.8" width="2" height="1.3" fill="#bbb"/>
<rect x="11.5" y="2" width="2" height="1.3" fill="#bbb"/><rect x="11.5" y="4.6" width="2" height="1.3" fill="#bbb"/><rect x="11.5" y="7.2" width="2" height="1.3" fill="#bbb"/><rect x="11.5" y="9.8" width="2" height="1.3" fill="#bbb"/>
<rect x="4" y="0.3" width="8" height="13.2" rx="1" fill="url(#chg)"/></svg>
<div class="t" style="left:100px;top:305.03px;font-size:12px;line-height:16px;font-weight:normal;color:#000;letter-spacing:0.07px;-webkit-text-stroke:0.15px #000">Intel Haswell-EN/EP/EP 4S/EX IIO - I/OxAPIC</div>
<div class="r" style="left:68px;top:328px;width:11px;height:1px;background:repeating-linear-gradient(to right,#8a8a8a 0 1px,transparent 1px 2px)"></div>
<svg class="r" style="left:79px;top:324px;" width="16" height="8" viewBox="0 0 16 8"><text x="1.2" y="5.6" font-family="Liberation Sans" font-weight="bold" font-style="italic" font-size="7.8" fill="#000" stroke="#000" stroke-width="0.7" textLength="14" lengthAdjust="spacingAndGlyphs">PCI</text>
<rect x="3.4" y="6" width="12" height="2" fill="#3aa8a8"/><path d="M0 8 L1 5 L3.8 5 L3.4 8 Z" fill="#000"/></svg>
<div class="t" style="left:100px;top:321.03px;font-size:12px;line-height:16px;font-weight:normal;color:#000;letter-spacing:0.07px;-webkit-text-stroke:0.15px #000">Intel Haswell-EN/EP/EP 4S/EX - I/O Performance Monitoring</div>
<div class="r" style="left:68px;top:344px;width:11px;height:1px;background:repeating-linear-gradient(to right,#8a8a8a 0 1px,transparent 1px 2px)"></div>
<svg class="r" style="left:79px;top:337px;" width="16" height="14" viewBox="0 0 16 14"><defs><linearGradient id="chg" x1="0" y1="0" x2="1" y2="0"><stop offset="0" stop-color="#3c3c3c"/><stop offset="0.5" stop-color="#666"/><stop offset="1" stop-color="#3a3a3a"/></linearGradient></defs>
<rect x="2.5" y="2" width="2" height="1.3" fill="#bbb"/><rect x="2.5" y="4.6" width="2" height="1.3" fill="#bbb"/><rect x="2.5" y="7.2" width="2" height="1.3" fill="#bbb"/><rect x="2.5" y="9.8" width="2" height="1.3" fill="#bbb"/>
<rect x="11.5" y="2" width="2" height="1.3" fill="#bbb"/><rect x="11.5" y="4.6" width="2" height="1.3" fill="#bbb"/><rect x="11.5" y="7.2" width="2" height="1.3" fill="#bbb"/><rect x="11.5" y="9.8" width="2" height="1.3" fill="#bbb"/>
<rect x="4" y="0.3" width="8" height="13.2" rx="1" fill="url(#chg)"/></svg>
<div class="t" style="left:100px;top:337.03px;font-size:12px;line-height:16px;font-weight:normal;color:#000;letter-spacing:0.07px;-webkit-text-stroke:0.15px #000">Intel Haswell-EN/EP/EP 4S/EX IIO - Debug and Error Injection</div>
<div class="r" style="left:68px;top:360px;width:11px;height:1px;background:repeating-linear-gradient(to right,#8a8a8a 0 1px,transparent 1px 2px)"></div>
<svg class="r" style="left:79px;top:353px;" width="16" height="14" viewBox="0 0 16 14"><defs><linearGradient id="chg" x1="0" y1="0" x2="1" y2="0"><stop offset="0" stop-color="#3c3c3c"/><stop offset="0.5" stop-color="#666"/><stop offset="1" stop-color="#3a3a3a"/></linearGradient></defs>
<rect x="2.5" y="2" width="2" height="1.3" fill="#bbb"/><rect x="2.5" y="4.6" width="2" height="1.3" fill="#bbb"/><rect x="2.5" y="7.2" width="2" height="1.3" fill="#bbb"/><rect x="2.5" y="9.8" width="2" height="1.3" fill="#bbb"/>
<rect x="11.5" y="2" width="2" height="1.3" fill="#bbb"/><rect x="11.5" y="4.6" width="2" height="1.3" fill="#bbb"/><rect x="11.5" y="7.2" width="2" height="1.3" fill="#bbb"/><rect x="11.5" y="9.8" width="2" height="1.3" fill="#bbb"/>
<rect x="4" y="0.3" width="8" height="13.2" rx="1" fill="url(#chg)"/></svg>
<div class="t" style="left:100px;top:353.03px;font-size:12px;line-height:16px;font-weight:normal;color:#000;letter-spacing:0.07px;-webkit-text-stroke:0.15px #000">Intel Haswell-EN/EP/EP 4S/EX IIO - Debug and Error Injection</div>
<div class="r" style="left:68px;top:376px;width:11px;height:1px;background:repeating-linear-gradient(to right,#8a8a8a 0 1px,transparent 1px 2px)"></div>
<svg class="r" style="left:79px;top:369px;" width="16" height="14" viewBox="0 0 16 14"><defs><linearGradient id="chg" x1="0" y1="0" x2="1" y2="0"><stop offset="0" stop-color="#3c3c3c"/><stop offset="0.5" stop-color="#666"/><stop offset="1" stop-color="#3a3a3a"/></linearGradient></defs>
<rect x="2.5" y="2" width="2" height="1.3" fill="#bbb"/><rect x="2.5" y="4.6" width="2" height="1.3" fill="#bbb"/><rect x="2.5" y="7.2" width="2" height="1.3" fill="#bbb"/><rect x="2.5" y="9.8" width="2" height="1.3" fill="#bbb"/>
<rect x="11.5" y="2" width="2" height="1.3" fill="#bbb"/><rect x="11.5" y="4.6" width="2" height="1.3" fill="#bbb"/><rect x="11.5" y="7.2" width="2" height="1.3" fill="#bbb"/><rect x="11.5" y="9.8" width="2" height="1.3" fill="#bbb"/>
<rect x="4" y="0.3" width="8" height="13.2" rx="1" fill="url(#chg)"/></svg>
<div class="t" style="left:100px;top:369.03px;font-size:12px;line-height:16px;font-weight:normal;color:#000;letter-spacing:0.07px;-webkit-text-stroke:0.15px #000">Intel Haswell-EN/EP/EP 4S/EX IIO - Debug and Error Injection</div>
<div class="r" style="left:68px;top:392px;width:11px;height:1px;background:repeating-linear-gradient(to right,#8a8a8a 0 1px,transparent 1px 2px)"></div>
<svg class="r" style="left:79px;top:385px;" width="16" height="14" viewBox="0 0 16 14"><defs><linearGradient id="chg" x1="0" y1="0" x2="1" y2="0"><stop offset="0" stop-color="#3c3c3c"/><stop offset="0.5" stop-color="#666"/><stop offset="1" stop-color="#3a3a3a"/></linearGradient></defs>
<rect x="2.5" y="2" width="2" height="1.3" fill="#bbb"/><rect x="2.5" y="4.6" width="2" height="1.3" fill="#bbb"/><rect x="2.5" y="7.2" width="2" height="1.3" fill="#bbb"/><rect x="2.5" y="9.8" width="2" height="1.3" fill="#bbb"/>
<rect x="11.5" y="2" width="2" height="1.3" fill="#bbb"/><rect x="11.5" y="4.6" width="2" height="1.3" fill="#bbb"/><rect x="11.5" y="7.2" width="2" height="1.3" fill="#bbb"/><rect x="11.5" y="9.8" width="2" height="1.3" fill="#bbb"/>
<rect x="4" y="0.3" width="8" height="13.2" rx="1" fill="url(#chg)"/></svg>
<div class="t" style="left:100px;top:385.03px;font-size:12px;line-height:16px;font-weight:normal;color:#000;letter-spacing:0.07px;-webkit-text-stroke:0.15px #000">Intel Haswell-EN/EP/EP 4S/EX IIO - Debug and Error Injection</div>
<div class="r" style="left:68px;top:408px;width:11px;height:1px;background:repeating-linear-gradient(to right,#8a8a8a 0 1px,transparent 1px 2px)"></div>
<svg class="r" style="left:79px;top:401px;" width="16" height="14" viewBox="0 0 16 14"><defs><linearGradient id="chg" x1="0" y1="0" x2="1" y2="0"><stop offset="0" stop-color="#3c3c3c"/><stop offset="0.5" stop-color="#666"/><stop offset="1" stop-color="#3a3a3a"/></linearGradient></defs>
<rect x="2.5" y="2" width="2" height="1.3" fill="#bbb"/><rect x="2.5" y="4.6" width="2" height="1.3" fill="#bbb"/><rect x="2.5" y="7.2" width="2" height="1.3" fill="#bbb"/><rect x="2.5" y="9.8" width="2" height="1.3" fill="#bbb"/>
<rect x="11.5" y="2" width="2" height="1.3" fill="#bbb"/><rect x="11.5" y="4.6" width="2" height="1.3" fill="#bbb"/><rect x="11.5" y="7.2" width="2" height="1.3" fill="#bbb"/><rect x="11.5" y="9.8" width="2" height="1.3" fill="#bbb"/>
<rect x="4" y="0.3" width="8" height="13.2" rx="1" fill="url(#chg)"/></svg>
<div class="t" style="left:100px;top:401.03px;font-size:12px;line-height:16px;font-weight:normal;color:#000;letter-spacing:0.07px;-webkit-text-stroke:0.15px #000">Intel Haswell-EN/EP/EP 4S/EX IIO - Debug and Error Injection</div>
<div class="r" style="left:68px;top:424px;width:11px;height:1px;background:repeating-linear-gradient(to right,#8a8a8a 0 1px,transparent 1px 2px)"></div>
<svg class="r" style="left:79px;top:417px;" width="16" height="14" viewBox="0 0 16 14"><defs><linearGradient id="chg" x1="0" y1="0" x2="1" y2="0"><stop offset="0" stop-color="#3c3c3c"/><stop offset="0.5" stop-color="#666"/><stop offset="1" stop-color="#3a3a3a"/></linearGradient></defs>
<rect x="2.5" y="2" width="2" height="1.3" fill="#bbb"/><rect x="2.5" y="4.6" width="2" height="1.3" fill="#bbb"/><rect x="2.5" y="7.2" width="2" height="1.3" fill="#bbb"/><rect x="2.5" y="9.8" width="2" height="1.3" fill="#bbb"/>
<rect x="11.5" y="2" width="2" height="1.3" fill="#bbb"/><rect x="11.5" y="4.6" width="2" height="1.3" fill="#bbb"/><rect x="11.5" y="7.2" width="2" height="1.3" fill="#bbb"/><rect x="11.5" y="9.8" width="2" height="1.3" fill="#bbb"/>
<rect x="4" y="0.3" width="8" height="13.2" rx="1" fill="url(#chg)"/></svg>
<div class="t" style="left:100px;top:417.03px;font-size:12px;line-height:16px;font-weight:normal;color:#000;letter-spacing:0.07px;-webkit-text-stroke:0.15px #000">Intel Haswell-EN/EP/EP 4S/EX IIO - Debug and Error Injection</div>
<div class="r" style="left:68px;top:440px;width:11px;height:1px;background:repeating-linear-gradient(to right,#8a8a8a 0 1px,transparent 1px 2px)"></div>
<svg class="r" style="left:79px;top:433px;" width="16" height="14" viewBox="0 0 16 14"><defs><linearGradient id="chg" x1="0" y1="0" x2="1" y2="0"><stop offset="0" stop-color="#3c3c3c"/><stop offset="0.5" stop-color="#666"/><stop offset="1" stop-color="#3a3a3a"/></linearGradient></defs>
<rect x="2.5" y="2" width="2" height="1.3" fill="#bbb"/><rect x="2.5" y="4.6" width="2" height="1.3" fill="#bbb"/><rect x="2.5" y="7.2" width="2" height="1.3" fill="#bbb"/><rect x="2.5" y="9.8" width="2" height="1.3" fill="#bbb"/>
<rect x="11.5" y="2" width="2" height="1.3" fill="#bbb"/><rect x="11.5" y="4.6" width="2" height="1.3" fill="#bbb"/><rect x="11.5" y="7.2" width="2" height="1.3" fill="#bbb"/><rect x="11.5" y="9.8" width="2" height="1.3" fill="#bbb"/>
<rect x="4" y="0.3" width="8" height="13.2" rx="1" fill="url(#chg)"/></svg>
<div class="t" style="left:100px;top:433.03px;font-size:12px;line-height:16px;font-weight:normal;color:#000;letter-spacing:0.07px;-webkit-text-stroke:0.15px #000">Intel Haswell-EN/EP/EP 4S/EX IIO - Debug and Error Injection</div>
<div class="r" style="left:68px;top:456px;width:11px;height:1px;background:repeating-linear-gradient(to right,#8a8a8a 0 1px,transparent 1px 2px)"></div>
<svg class="r" style="left:79px;top:449px;" width="16" height="14" viewBox="0 0 16 14"><defs><linearGradient id="chg" x1="0" y1="0" x2="1" y2="0"><stop offset="0" stop-color="#3c3c3c"/><stop offset="0.5" stop-color="#666"/><stop offset="1" stop-color="#3a3a3a"/></linearGradient></defs>
<rect x="2.5" y="2" width="2" height="1.3" fill="#bbb"/><rect x="2.5" y="4.6" width="2" height="1.3" fill="#bbb"/><rect x="2.5" y="7.2" width="2" height="1.3" fill="#bbb"/><rect x="2.5" y="9.8" width="2" height="1.3" fill="#bbb"/>
<rect x="11.5" y="2" width="2" height="1.3" fill="#bbb"/><rect x="11.5" y="4.6" width="2" height="1.3" fill="#bbb"/><rect x="11.5" y="7.2" width="2" height="1.3" fill="#bbb"/><rect x="11.5" y="9.8" width="2" height="1.3" fill="#bbb"/>
<rect x="4" y="0.3" width="8" height="13.2" rx="1" fill="url(#chg)"/></svg>
<div class="t" style="left:100px;top:449.03px;font-size:12px;line-height:16px;font-weight:normal;color:#000;letter-spacing:0.07px;-webkit-text-stroke:0.15px #000">Intel Haswell-EN/EP/EP 4S/EX IIO - Hotplug</div>
</div>
<div class="r" style="left:428px;top:133px;width:461px;height:451px;overflow:hidden;background:#fff">
<svg class="r" style="left:7px;top:5px;" width="11" height="10" viewBox="0 0 11 10"><g fill="#d8aa38"><rect x="0" y="0" width="9" height="1.2"/><rect x="0" y="2" width="9" height="1.2"/><rect x="0" y="4" width="9" height="1.2"/><rect x="0" y="6" width="9" height="1.2"/></g>
<g fill="#f4e4b0"><rect x="0" y="1.2" width="9" height="0.6"/><rect x="0" y="3.2" width="9" height="0.6"/><rect x="0" y="5.2" width="9" height="0.6"/></g>
<rect x="1" y="7.4" width="9" height="1.2" fill="#dcdcdc" opacity="0.7"/></svg>
<div class="t" style="left:22.30000000000001px;top:2.53px;font-size:10.5px;line-height:14px;font-weight:bold;color:#000;"><u>General Information</u></div>
<svg class="r" style="left:4px;top:22px;" width="17" height="12" viewBox="0 0 17 12"><path d="M0.2 5 L12.4 0 L16 3.8 L3.6 10.6 Z" fill="#2a2a2a"/>
<path d="M0.2 5 L3.6 10.6 L3.4 11.8 L0.6 7 Z" fill="#4a4a4a"/>
<path d="M2.6 5.3 L5.6 4.1 L6.3 5 L3.3 6.3 Z" fill="#c81828"/><path d="M6 3 L8.6 1.9 L9.3 2.8 L6.7 3.9 Z" fill="#b01020"/>
<path d="M7.4 7.2 L11 5.4 L11.7 6.2 L8.1 8 Z" fill="#c81828"/><path d="M10.8 1.6 L13 0.8 L13.6 1.8 L11.4 2.7 Z" fill="#9a9a9a"/>
<path d="M3.5 6.8 L5 6.1 M9 4.5 L11 3.7" stroke="#777" stroke-width="0.7"/>
<path d="M4.5 9 L14 4" stroke="#555" stroke-width="0.5"/></svg>
<div class="t" style="left:22.30000000000001px;top:21.03px;font-size:12px;line-height:16px;font-weight:bold;color:#000;">Device Name:</div>
<div class="t" style="left:231.5px;top:20.90px;font-size:12.4px;line-height:16px;font-weight:bold;color:#0c5ed8;">AJA Video, Device ID: EB0B</div>
<svg class="r" style="left:4px;top:41px;" width="17" height="12" viewBox="0 0 17 12"><path d="M0.2 5 L12.4 0 L16 3.8 L3.6 10.6 Z" fill="#2a2a2a"/>
<path d="M0.2 5 L3.6 10.6 L3.4 11.8 L0.6 7 Z" fill="#4a4a4a"/>
<path d="M2.6 5.3 L5.6 4.1 L6.3 5 L3.3 6.3 Z" fill="#c81828"/><path d="M6 3 L8.6 1.9 L9.3 2.8 L6.7 3.9 Z" fill="#b01020"/>
<path d="M7.4 7.2 L11 5.4 L11.7 6.2 L8.1 8 Z" fill="#c81828"/><path d="M10.8 1.6 L13 0.8 L13.6 1.8 L11.4 2.7 Z" fill="#9a9a9a"/>
<path d="M3.5 6.8 L5 6.1 M9 4.5 L11 3.7" stroke="#777" stroke-width="0.7"/>
<path d="M4.5 9 L14 4" stroke="#555" stroke-width="0.5"/></svg>
<div class="t" style="left:22.30000000000001px;top:40.03px;font-size:12px;line-height:16px;font-weight:bold;color:#000;">Original Device Name:</div>
<div class="t" style="left:231.5px;top:39.90px;font-size:12.4px;line-height:16px;font-weight:bold;color:#0c5ed8;">AJA Video, Device ID: EB0B</div>
<svg class="r" style="left:4px;top:60px;" width="17" height="12" viewBox="0 0 17 12"><path d="M0.2 5 L12.4 0 L16 3.8 L3.6 10.6 Z" fill="#2a2a2a"/>
<path d="M0.2 5 L3.6 10.6 L3.4 11.8 L0.6 7 Z" fill="#4a4a4a"/>
<path d="M2.6 5.3 L5.6 4.1 L6.3 5 L3.3 6.3 Z" fill="#c81828"/><path d="M6 3 L8.6 1.9 L9.3 2.8 L6.7 3.9 Z" fill="#b01020"/>
<path d="M7.4 7.2 L11 5.4 L11.7 6.2 L8.1 8 Z" fill="#c81828"/><path d="M10.8 1.6 L13 0.8 L13.6 1.8 L11.4 2.7 Z" fill="#9a9a9a"/>
<path d="M3.5 6.8 L5 6.1 M9 4.5 L11 3.7" stroke="#777" stroke-width="0.7"/>
<path d="M4.5 9 L14 4" stroke="#555" stroke-width="0.5"/></svg>
<div class="t" style="left:22.30000000000001px;top:59.03px;font-size:12px;line-height:16px;font-weight:bold;color:#000;">Device Class:</div>
<div class="t" style="left:231.5px;top:59.03px;font-size:12px;line-height:16px;font-weight:bold;color:#000;letter-spacing:0.47px">Multimedia Video Adapter</div>
<svg class="r" style="left:4px;top:81px;" width="16" height="8" viewBox="0 0 16 8"><text x="1.2" y="5.6" font-family="Liberation Sans" font-weight="bold" font-style="italic" font-size="7.8" fill="#000" stroke="#000" stroke-width="0.7" textLength="14" lengthAdjust="spacingAndGlyphs">PCI</text>
<rect x="3.4" y="6" width="12" height="2" fill="#3aa8a8"/><path d="M0 8 L1 5 L3.8 5 L3.4 8 Z" fill="#000"/></svg>
<div class="t" style="left:22.30000000000001px;top:78.03px;font-size:12px;line-height:16px;font-weight:normal;color:#000;letter-spacing:0.1px">Revision ID:</div>
<div class="t" style="left:231.5px;top:78.03px;font-size:12px;line-height:16px;font-weight:normal;color:#000;letter-spacing:0.1px">0</div>
<svg class="r" style="left:4px;top:100px;" width="16" height="8" viewBox="0 0 16 8"><text x="1.2" y="5.6" font-family="Liberation Sans" font-weight="bold" font-style="italic" font-size="7.8" fill="#000" stroke="#000" stroke-width="0.7" textLength="14" lengthAdjust="spacingAndGlyphs">PCI</text>
<rect x="3.4" y="6" width="12" height="2" fill="#3aa8a8"/><path d="M0 8 L1 5 L3.8 5 L3.4 8 Z" fill="#000"/></svg>
<div class="t" style="left:22.30000000000001px;top:98.63px;font-size:10.2px;line-height:13px;font-weight:normal;color:#000;">PCI Address (Bus:Device:Function) Nu...</div>
<div class="t" style="left:231.5px;top:99.33px;font-size:9.6px;line-height:12px;font-weight:normal;color:#000;">3:0:0</div>
<svg class="r" style="left:4px;top:119px;" width="16" height="8" viewBox="0 0 16 8"><text x="1.2" y="5.6" font-family="Liberation Sans" font-weight="bold" font-style="italic" font-size="7.8" fill="#000" stroke="#000" stroke-width="0.7" textLength="14" lengthAdjust="spacingAndGlyphs">PCI</text>
<rect x="3.4" y="6" width="12" height="2" fill="#3aa8a8"/><path d="M0 8 L1 5 L3.8 5 L3.4 8 Z" fill="#000"/></svg>
<div class="t" style="left:22.30000000000001px;top:117.63px;font-size:10.2px;line-height:13px;font-weight:normal;color:#000;">PCI Latency Timer:</div>
<div class="t" style="left:231.5px;top:118.33px;font-size:9.6px;line-height:12px;font-weight:normal;color:#000;">0</div>
<svg class="r" style="left:4px;top:133px;" width="16" height="16" viewBox="0 0 16 16"><g fill="#4a90d8"><circle cx="7" cy="7.5" r="5.3"/>
<rect x="5.6" y="0.6" width="2.8" height="13.8"/><rect x="0.1" y="6.1" width="13.8" height="2.8"/>
<rect x="5.6" y="0.6" width="2.8" height="13.8" transform="rotate(45 7 7.5)"/><rect x="5.6" y="0.6" width="2.8" height="13.8" transform="rotate(-45 7 7.5)"/></g>
<circle cx="7" cy="7.5" r="3.6" fill="#8cc4f0"/><circle cx="7" cy="7.5" r="1.8" fill="#fff"/>
<g fill="#f0a018"><circle cx="12" cy="12.5" r="3.3"/><rect x="11.1" y="8.2" width="1.8" height="8.6"/><rect x="7.7" y="11.6" width="8.6" height="1.8"/>
<rect x="11.1" y="8.2" width="1.8" height="8.6" transform="rotate(45 12 12.5)"/><rect x="11.1" y="8.2" width="1.8" height="8.6" transform="rotate(-45 12 12.5)"/></g>
<circle cx="12" cy="12.5" r="2.4" fill="#fcd040"/><circle cx="12" cy="12.5" r="1" fill="#3a80d8"/></svg>
<div class="t" style="left:22.30000000000001px;top:136.63px;font-size:10.2px;line-height:13px;font-weight:normal;color:#000;">Hardware ID:</div>
<div class="t" style="left:231.5px;top:137.33px;font-size:9.6px;line-height:12px;font-weight:normal;color:#000;">PCI\VEN_F1D0&amp;DEV_EB0B&amp;SUBSYS_...</div>
<svg class="r" style="left:7px;top:176px;" width="11" height="10" viewBox="0 0 11 10"><g fill="#d8aa38"><rect x="0" y="0" width="9" height="1.2"/><rect x="0" y="2" width="9" height="1.2"/><rect x="0" y="4" width="9" height="1.2"/><rect x="0" y="6" width="9" height="1.2"/></g>
<g fill="#f4e4b0"><rect x="0" y="1.2" width="9" height="0.6"/><rect x="0" y="3.2" width="9" height="0.6"/><rect x="0" y="5.2" width="9" height="0.6"/></g>
<rect x="1" y="7.4" width="9" height="1.2" fill="#dcdcdc" opacity="0.7"/></svg>
<div class="t" style="left:22.30000000000001px;top:173.53px;font-size:10.5px;line-height:14px;font-weight:bold;color:#000;"><u>PCI Express</u></div>
<svg class="r" style="left:4px;top:195px;" width="16" height="8" viewBox="0 0 16 8"><rect x="0.3" y="0" width="1" height="5" fill="#4a4a4a"/><rect x="0.3" y="0" width="3.3" height="0.9" fill="#4a4a4a"/><rect x="0.3" y="2.1" width="3.3" height="0.9" fill="#4a4a4a"/><rect x="2.9" y="0" width="0.9" height="3" fill="#4a4a4a"/><rect x="4.8" y="0" width="3.3" height="0.9" fill="#4a4a4a"/><rect x="4.8" y="4.1" width="3.3" height="0.9" fill="#4a4a4a"/><rect x="4.8" y="0" width="1" height="5" fill="#4a4a4a"/><rect x="9" y="0" width="1" height="5" fill="#4a4a4a"/><rect x="0" y="5.4" width="16" height="2.6" fill="#3a3a3a"/><rect x="1.8" y="5.9" width="0.7" height="1.6" fill="#c8c8c8"/><rect x="4.1" y="5.9" width="0.7" height="1.6" fill="#c8c8c8"/><rect x="6.3" y="5.9" width="0.7" height="1.6" fill="#c8c8c8"/><rect x="8.5" y="5.9" width="0.7" height="1.6" fill="#c8c8c8"/><rect x="10.7" y="5.9" width="0.7" height="1.6" fill="#c8c8c8"/><rect x="12.9" y="5.9" width="0.7" height="1.6" fill="#c8c8c8"/><rect x="14.8" y="5.9" width="0.7" height="1.6" fill="#c8c8c8"/><path d="M10.9 0.5 H13 L15.5 2.5 L13 4.5 H10.9 L12.3 2.5 Z" fill="#eef3fa" stroke="#6a90d4" stroke-width="0.85"/></svg>
<div class="t" style="left:22.30000000000001px;top:192.03px;font-size:12px;line-height:16px;font-weight:normal;color:#000;letter-spacing:0.1px">Version:</div>
<div class="t" style="left:231.5px;top:192.03px;font-size:12px;line-height:16px;font-weight:normal;color:#000;letter-spacing:0.1px">2.0</div>
<svg class="r" style="left:4px;top:214px;" width="16" height="8" viewBox="0 0 16 8"><rect x="0.3" y="0" width="1" height="5" fill="#4a4a4a"/><rect x="0.3" y="0" width="3.3" height="0.9" fill="#4a4a4a"/><rect x="0.3" y="2.1" width="3.3" height="0.9" fill="#4a4a4a"/><rect x="2.9" y="0" width="0.9" height="3" fill="#4a4a4a"/><rect x="4.8" y="0" width="3.3" height="0.9" fill="#4a4a4a"/><rect x="4.8" y="4.1" width="3.3" height="0.9" fill="#4a4a4a"/><rect x="4.8" y="0" width="1" height="5" fill="#4a4a4a"/><rect x="9" y="0" width="1" height="5" fill="#4a4a4a"/><rect x="0" y="5.4" width="16" height="2.6" fill="#3a3a3a"/><rect x="1.8" y="5.9" width="0.7" height="1.6" fill="#c8c8c8"/><rect x="4.1" y="5.9" width="0.7" height="1.6" fill="#c8c8c8"/><rect x="6.3" y="5.9" width="0.7" height="1.6" fill="#c8c8c8"/><rect x="8.5" y="5.9" width="0.7" height="1.6" fill="#c8c8c8"/><rect x="10.7" y="5.9" width="0.7" height="1.6" fill="#c8c8c8"/><rect x="12.9" y="5.9" width="0.7" height="1.6" fill="#c8c8c8"/><rect x="14.8" y="5.9" width="0.7" height="1.6" fill="#c8c8c8"/><path d="M10.9 0.5 H13 L15.5 2.5 L13 4.5 H10.9 L12.3 2.5 Z" fill="#eef3fa" stroke="#6a90d4" stroke-width="0.85"/></svg>
<div class="t" style="left:22.30000000000001px;top:211.03px;font-size:12px;line-height:16px;font-weight:normal;color:#000;letter-spacing:0.1px">Maximum Link Width:</div>
<div class="t" style="left:231.5px;top:211.03px;font-size:12px;line-height:16px;font-weight:normal;color:#000;letter-spacing:0.1px">8x</div>
<svg class="r" style="left:4px;top:233px;" width="16" height="8" viewBox="0 0 16 8"><rect x="0.3" y="0" width="1" height="5" fill="#4a4a4a"/><rect x="0.3" y="0" width="3.3" height="0.9" fill="#4a4a4a"/><rect x="0.3" y="2.1" width="3.3" height="0.9" fill="#4a4a4a"/><rect x="2.9" y="0" width="0.9" height="3" fill="#4a4a4a"/><rect x="4.8" y="0" width="3.3" height="0.9" fill="#4a4a4a"/><rect x="4.8" y="4.1" width="3.3" height="0.9" fill="#4a4a4a"/><rect x="4.8" y="0" width="1" height="5" fill="#4a4a4a"/><rect x="9" y="0" width="1" height="5" fill="#4a4a4a"/><rect x="0" y="5.4" width="16" height="2.6" fill="#3a3a3a"/><rect x="1.8" y="5.9" width="0.7" height="1.6" fill="#c8c8c8"/><rect x="4.1" y="5.9" width="0.7" height="1.6" fill="#c8c8c8"/><rect x="6.3" y="5.9" width="0.7" height="1.6" fill="#c8c8c8"/><rect x="8.5" y="5.9" width="0.7" height="1.6" fill="#c8c8c8"/><rect x="10.7" y="5.9" width="0.7" height="1.6" fill="#c8c8c8"/><rect x="12.9" y="5.9" width="0.7" height="1.6" fill="#c8c8c8"/><rect x="14.8" y="5.9" width="0.7" height="1.6" fill="#c8c8c8"/><path d="M10.9 0.5 H13 L15.5 2.5 L13 4.5 H10.9 L12.3 2.5 Z" fill="#eef3fa" stroke="#6a90d4" stroke-width="0.85"/></svg>
<div class="t" style="left:22.30000000000001px;top:230.03px;font-size:12px;line-height:16px;font-weight:normal;color:#000;letter-spacing:0.1px">Current Link Width:</div>
<div class="t" style="left:231.5px;top:230.03px;font-size:12px;line-height:16px;font-weight:normal;color:#000;letter-spacing:0.1px">8x</div>
<svg class="r" style="left:4px;top:252px;" width="16" height="8" viewBox="0 0 16 8"><rect x="0.3" y="0" width="1" height="5" fill="#4a4a4a"/><rect x="0.3" y="0" width="3.3" height="0.9" fill="#4a4a4a"/><rect x="0.3" y="2.1" width="3.3" height="0.9" fill="#4a4a4a"/><rect x="2.9" y="0" width="0.9" height="3" fill="#4a4a4a"/><rect x="4.8" y="0" width="3.3" height="0.9" fill="#4a4a4a"/><rect x="4.8" y="4.1" width="3.3" height="0.9" fill="#4a4a4a"/><rect x="4.8" y="0" width="1" height="5" fill="#4a4a4a"/><rect x="9" y="0" width="1" height="5" fill="#4a4a4a"/><rect x="0" y="5.4" width="16" height="2.6" fill="#3a3a3a"/><rect x="1.8" y="5.9" width="0.7" height="1.6" fill="#c8c8c8"/><rect x="4.1" y="5.9" width="0.7" height="1.6" fill="#c8c8c8"/><rect x="6.3" y="5.9" width="0.7" height="1.6" fill="#c8c8c8"/><rect x="8.5" y="5.9" width="0.7" height="1.6" fill="#c8c8c8"/><rect x="10.7" y="5.9" width="0.7" height="1.6" fill="#c8c8c8"/><rect x="12.9" y="5.9" width="0.7" height="1.6" fill="#c8c8c8"/><rect x="14.8" y="5.9" width="0.7" height="1.6" fill="#c8c8c8"/><path d="M10.9 0.5 H13 L15.5 2.5 L13 4.5 H10.9 L12.3 2.5 Z" fill="#eef3fa" stroke="#6a90d4" stroke-width="0.85"/></svg>
<div class="t" style="left:22.30000000000001px;top:249.03px;font-size:12px;line-height:16px;font-weight:normal;color:#000;letter-spacing:0.1px">Maximum Link Speed:</div>
<div class="t" style="left:231.5px;top:249.03px;font-size:12px;line-height:16px;font-weight:normal;color:#000;letter-spacing:0.1px">5.0 GT/s</div>
<svg class="r" style="left:4px;top:271px;" width="16" height="8" viewBox="0 0 16 8"><rect x="0.3" y="0" width="1" height="5" fill="#4a4a4a"/><rect x="0.3" y="0" width="3.3" height="0.9" fill="#4a4a4a"/><rect x="0.3" y="2.1" width="3.3" height="0.9" fill="#4a4a4a"/><rect x="2.9" y="0" width="0.9" height="3" fill="#4a4a4a"/><rect x="4.8" y="0" width="3.3" height="0.9" fill="#4a4a4a"/><rect x="4.8" y="4.1" width="3.3" height="0.9" fill="#4a4a4a"/><rect x="4.8" y="0" width="1" height="5" fill="#4a4a4a"/><rect x="9" y="0" width="1" height="5" fill="#4a4a4a"/><rect x="0" y="5.4" width="16" height="2.6" fill="#3a3a3a"/><rect x="1.8" y="5.9" width="0.7" height="1.6" fill="#c8c8c8"/><rect x="4.1" y="5.9" width="0.7" height="1.6" fill="#c8c8c8"/><rect x="6.3" y="5.9" width="0.7" height="1.6" fill="#c8c8c8"/><rect x="8.5" y="5.9" width="0.7" height="1.6" fill="#c8c8c8"/><rect x="10.7" y="5.9" width="0.7" height="1.6" fill="#c8c8c8"/><rect x="12.9" y="5.9" width="0.7" height="1.6" fill="#c8c8c8"/><rect x="14.8" y="5.9" width="0.7" height="1.6" fill="#c8c8c8"/><path d="M10.9 0.5 H13 L15.5 2.5 L13 4.5 H10.9 L12.3 2.5 Z" fill="#eef3fa" stroke="#6a90d4" stroke-width="0.85"/></svg>
<div class="t" style="left:22.30000000000001px;top:268.03px;font-size:12px;line-height:16px;font-weight:normal;color:#000;letter-spacing:0.1px">Current Link Speed:</div>
<div class="t" style="left:231.5px;top:268.03px;font-size:12px;line-height:16px;font-weight:normal;color:#000;letter-spacing:0.1px">5.0 GT/s</div>
<svg class="r" style="left:4px;top:290px;" width="16" height="8" viewBox="0 0 16 8"><rect x="0.3" y="0" width="1" height="5" fill="#4a4a4a"/><rect x="0.3" y="0" width="3.3" height="0.9" fill="#4a4a4a"/><rect x="0.3" y="2.1" width="3.3" height="0.9" fill="#4a4a4a"/><rect x="2.9" y="0" width="0.9" height="3" fill="#4a4a4a"/><rect x="4.8" y="0" width="3.3" height="0.9" fill="#4a4a4a"/><rect x="4.8" y="4.1" width="3.3" height="0.9" fill="#4a4a4a"/><rect x="4.8" y="0" width="1" height="5" fill="#4a4a4a"/><rect x="9" y="0" width="1" height="5" fill="#4a4a4a"/><rect x="0" y="5.4" width="16" height="2.6" fill="#3a3a3a"/><rect x="1.8" y="5.9" width="0.7" height="1.6" fill="#c8c8c8"/><rect x="4.1" y="5.9" width="0.7" height="1.6" fill="#c8c8c8"/><rect x="6.3" y="5.9" width="0.7" height="1.6" fill="#c8c8c8"/><rect x="8.5" y="5.9" width="0.7" height="1.6" fill="#c8c8c8"/><rect x="10.7" y="5.9" width="0.7" height="1.6" fill="#c8c8c8"/><rect x="12.9" y="5.9" width="0.7" height="1.6" fill="#c8c8c8"/><rect x="14.8" y="5.9" width="0.7" height="1.6" fill="#c8c8c8"/><path d="M10.9 0.5 H13 L15.5 2.5 L13 4.5 H10.9 L12.3 2.5 Z" fill="#eef3fa" stroke="#6a90d4" stroke-width="0.85"/></svg>
<div class="t" style="left:22.30000000000001px;top:287.03px;font-size:12px;line-height:16px;font-weight:normal;color:#000;letter-spacing:0.1px">Device/Port Type:</div>
<div class="t" style="left:231.5px;top:287.03px;font-size:12px;line-height:16px;font-weight:normal;color:#000;letter-spacing:0.1px">PCI Express Endpoint</div>
<svg class="r" style="left:5px;top:305px;" width="15" height="15" viewBox="0 0 15 15"><defs><radialGradient id="erg" cx="0.5" cy="0.62" r="0.55"><stop offset="0" stop-color="#f07a10"/><stop offset="0.55" stop-color="#e04418"/><stop offset="1" stop-color="#c81818"/></radialGradient>
<linearGradient id="erh" x1="0" y1="0" x2="0" y2="1"><stop offset="0" stop-color="#ff9090" stop-opacity="0.8"/><stop offset="1" stop-color="#ff9090" stop-opacity="0"/></linearGradient></defs>
<circle cx="7.3" cy="7.3" r="6.9" fill="#c41616"/>
<circle cx="7.3" cy="7.5" r="5.6" fill="url(#erg)"/>
<ellipse cx="7.3" cy="4" rx="4.5" ry="2.6" fill="url(#erh)"/>
<path d="M4.6 4.6 L10 10 M10 4.6 L4.6 10" stroke="#fff" stroke-width="1.9"/></svg>
<div class="t" style="left:22.30000000000001px;top:306.03px;font-size:12px;line-height:16px;font-weight:normal;color:#000;letter-spacing:0.1px">Slot Implemented:</div>
<div class="t" style="left:231.5px;top:306.03px;font-size:12px;line-height:16px;font-weight:normal;color:#000;letter-spacing:0.1px">No</div>
<svg class="r" style="left:5px;top:324px;" width="15" height="15" viewBox="0 0 15 15"><defs><radialGradient id="erg" cx="0.5" cy="0.62" r="0.55"><stop offset="0" stop-color="#f07a10"/><stop offset="0.55" stop-color="#e04418"/><stop offset="1" stop-color="#c81818"/></radialGradient>
<linearGradient id="erh" x1="0" y1="0" x2="0" y2="1"><stop offset="0" stop-color="#ff9090" stop-opacity="0.8"/><stop offset="1" stop-color="#ff9090" stop-opacity="0"/></linearGradient></defs>
<circle cx="7.3" cy="7.3" r="6.9" fill="#c41616"/>
<circle cx="7.3" cy="7.5" r="5.6" fill="url(#erg)"/>
<ellipse cx="7.3" cy="4" rx="4.5" ry="2.6" fill="url(#erh)"/>
<path d="M4.6 4.6 L10 10 M10 4.6 L4.6 10" stroke="#fff" stroke-width="1.9"/></svg>
<div class="t" style="left:22.30000000000001px;top:325.03px;font-size:12px;line-height:16px;font-weight:normal;color:#000;letter-spacing:0.1px">Emergency Power Reduction:</div>
<div class="t" style="left:231.5px;top:325.03px;font-size:12px;line-height:16px;font-weight:normal;color:#000;letter-spacing:0.1px">Not Supported</div>
<svg class="r" style="left:4px;top:347px;" width="16" height="8" viewBox="0 0 16 8"><rect x="0.3" y="0" width="1" height="5" fill="#4a4a4a"/><rect x="0.3" y="0" width="3.3" height="0.9" fill="#4a4a4a"/><rect x="0.3" y="2.1" width="3.3" height="0.9" fill="#4a4a4a"/><rect x="2.9" y="0" width="0.9" height="3" fill="#4a4a4a"/><rect x="4.8" y="0" width="3.3" height="0.9" fill="#4a4a4a"/><rect x="4.8" y="4.1" width="3.3" height="0.9" fill="#4a4a4a"/><rect x="4.8" y="0" width="1" height="5" fill="#4a4a4a"/><rect x="9" y="0" width="1" height="5" fill="#4a4a4a"/><rect x="0" y="5.4" width="16" height="2.6" fill="#3a3a3a"/><rect x="1.8" y="5.9" width="0.7" height="1.6" fill="#c8c8c8"/><rect x="4.1" y="5.9" width="0.7" height="1.6" fill="#c8c8c8"/><rect x="6.3" y="5.9" width="0.7" height="1.6" fill="#c8c8c8"/><rect x="8.5" y="5.9" width="0.7" height="1.6" fill="#c8c8c8"/><rect x="10.7" y="5.9" width="0.7" height="1.6" fill="#c8c8c8"/><rect x="12.9" y="5.9" width="0.7" height="1.6" fill="#c8c8c8"/><rect x="14.8" y="5.9" width="0.7" height="1.6" fill="#c8c8c8"/><path d="M10.9 0.5 H13 L15.5 2.5 L13 4.5 H10.9 L12.3 2.5 Z" fill="#eef3fa" stroke="#6a90d4" stroke-width="0.85"/></svg>
<div class="t" style="left:22.30000000000001px;top:344.03px;font-size:12px;line-height:16px;font-weight:normal;color:#000;letter-spacing:0.1px">Active State Power Managemen...</div>
<div class="t" style="left:231.5px;top:344.03px;font-size:12px;line-height:16px;font-weight:normal;color:#000;letter-spacing:0.1px">L0s</div>
<svg class="r" style="left:4px;top:366px;" width="16" height="8" viewBox="0 0 16 8"><rect x="0.3" y="0" width="1" height="5" fill="#4a4a4a"/><rect x="0.3" y="0" width="3.3" height="0.9" fill="#4a4a4a"/><rect x="0.3" y="2.1" width="3.3" height="0.9" fill="#4a4a4a"/><rect x="2.9" y="0" width="0.9" height="3" fill="#4a4a4a"/><rect x="4.8" y="0" width="3.3" height="0.9" fill="#4a4a4a"/><rect x="4.8" y="4.1" width="3.3" height="0.9" fill="#4a4a4a"/><rect x="4.8" y="0" width="1" height="5" fill="#4a4a4a"/><rect x="9" y="0" width="1" height="5" fill="#4a4a4a"/><rect x="0" y="5.4" width="16" height="2.6" fill="#3a3a3a"/><rect x="1.8" y="5.9" width="0.7" height="1.6" fill="#c8c8c8"/><rect x="4.1" y="5.9" width="0.7" height="1.6" fill="#c8c8c8"/><rect x="6.3" y="5.9" width="0.7" height="1.6" fill="#c8c8c8"/><rect x="8.5" y="5.9" width="0.7" height="1.6" fill="#c8c8c8"/><rect x="10.7" y="5.9" width="0.7" height="1.6" fill="#c8c8c8"/><rect x="12.9" y="5.9" width="0.7" height="1.6" fill="#c8c8c8"/><rect x="14.8" y="5.9" width="0.7" height="1.6" fill="#c8c8c8"/><path d="M10.9 0.5 H13 L15.5 2.5 L13 4.5 H10.9 L12.3 2.5 Z" fill="#eef3fa" stroke="#6a90d4" stroke-width="0.85"/></svg>
<div class="t" style="left:22.30000000000001px;top:363.03px;font-size:12px;line-height:16px;font-weight:normal;color:#000;letter-spacing:0.1px">Active State Power Managemen...</div>
<div class="t" style="left:231.5px;top:363.03px;font-size:12px;line-height:16px;font-weight:normal;color:#000;letter-spacing:0.1px">Disabled</div>
<svg class="r" style="left:4px;top:385px;" width="16" height="8" viewBox="0 0 16 8"><rect x="0.3" y="0" width="1" height="5" fill="#4a4a4a"/><rect x="0.3" y="0" width="3.3" height="0.9" fill="#4a4a4a"/><rect x="0.3" y="2.1" width="3.3" height="0.9" fill="#4a4a4a"/><rect x="2.9" y="0" width="0.9" height="3" fill="#4a4a4a"/><rect x="4.8" y="0" width="3.3" height="0.9" fill="#4a4a4a"/><rect x="4.8" y="4.1" width="3.3" height="0.9" fill="#4a4a4a"/><rect x="4.8" y="0" width="1" height="5" fill="#4a4a4a"/><rect x="9" y="0" width="1" height="5" fill="#4a4a4a"/><rect x="0" y="5.4" width="16" height="2.6" fill="#3a3a3a"/><rect x="1.8" y="5.9" width="0.7" height="1.6" fill="#c8c8c8"/><rect x="4.1" y="5.9" width="0.7" height="1.6" fill="#c8c8c8"/><rect x="6.3" y="5.9" width="0.7" height="1.6" fill="#c8c8c8"/><rect x="8.5" y="5.9" width="0.7" height="1.6" fill="#c8c8c8"/><rect x="10.7" y="5.9" width="0.7" height="1.6" fill="#c8c8c8"/><rect x="12.9" y="5.9" width="0.7" height="1.6" fill="#c8c8c8"/><rect x="14.8" y="5.9" width="0.7" height="1.6" fill="#c8c8c8"/><path d="M10.9 0.5 H13 L15.5 2.5 L13 4.5 H10.9 L12.3 2.5 Z" fill="#eef3fa" stroke="#6a90d4" stroke-width="0.85"/></svg>
<div class="t" style="left:22.30000000000001px;top:382.03px;font-size:12px;line-height:16px;font-weight:normal;color:#000;letter-spacing:0.1px">L0s Exit Latency:</div>
<div class="t" style="left:231.5px;top:382.03px;font-size:12px;line-height:16px;font-weight:normal;color:#000;letter-spacing:0.1px">&gt;4 us</div>
<svg class="r" style="left:4px;top:404px;" width="16" height="8" viewBox="0 0 16 8"><rect x="0.3" y="0" width="1" height="5" fill="#4a4a4a"/><rect x="0.3" y="0" width="3.3" height="0.9" fill="#4a4a4a"/><rect x="0.3" y="2.1" width="3.3" height="0.9" fill="#4a4a4a"/><rect x="2.9" y="0" width="0.9" height="3" fill="#4a4a4a"/><rect x="4.8" y="0" width="3.3" height="0.9" fill="#4a4a4a"/><rect x="4.8" y="4.1" width="3.3" height="0.9" fill="#4a4a4a"/><rect x="4.8" y="0" width="1" height="5" fill="#4a4a4a"/><rect x="9" y="0" width="1" height="5" fill="#4a4a4a"/><rect x="0" y="5.4" width="16" height="2.6" fill="#3a3a3a"/><rect x="1.8" y="5.9" width="0.7" height="1.6" fill="#c8c8c8"/><rect x="4.1" y="5.9" width="0.7" height="1.6" fill="#c8c8c8"/><rect x="6.3" y="5.9" width="0.7" height="1.6" fill="#c8c8c8"/><rect x="8.5" y="5.9" width="0.7" height="1.6" fill="#c8c8c8"/><rect x="10.7" y="5.9" width="0.7" height="1.6" fill="#c8c8c8"/><rect x="12.9" y="5.9" width="0.7" height="1.6" fill="#c8c8c8"/><rect x="14.8" y="5.9" width="0.7" height="1.6" fill="#c8c8c8"/><path d="M10.9 0.5 H13 L15.5 2.5 L13 4.5 H10.9 L12.3 2.5 Z" fill="#eef3fa" stroke="#6a90d4" stroke-width="0.85"/></svg>
<div class="t" style="left:22.30000000000001px;top:401.03px;font-size:12px;line-height:16px;font-weight:normal;color:#000;letter-spacing:0.1px">L1 Exit Latency:</div>
<div class="t" style="left:231.5px;top:401.03px;font-size:12px;line-height:16px;font-weight:normal;color:#000;letter-spacing:0.1px">&gt;64 us</div>
<svg class="r" style="left:4px;top:423px;" width="16" height="8" viewBox="0 0 16 8"><rect x="0.3" y="0" width="1" height="5" fill="#4a4a4a"/><rect x="0.3" y="0" width="3.3" height="0.9" fill="#4a4a4a"/><rect x="0.3" y="2.1" width="3.3" height="0.9" fill="#4a4a4a"/><rect x="2.9" y="0" width="0.9" height="3" fill="#4a4a4a"/><rect x="4.8" y="0" width="3.3" height="0.9" fill="#4a4a4a"/><rect x="4.8" y="4.1" width="3.3" height="0.9" fill="#4a4a4a"/><rect x="4.8" y="0" width="1" height="5" fill="#4a4a4a"/><rect x="9" y="0" width="1" height="5" fill="#4a4a4a"/><rect x="0" y="5.4" width="16" height="2.6" fill="#3a3a3a"/><rect x="1.8" y="5.9" width="0.7" height="1.6" fill="#c8c8c8"/><rect x="4.1" y="5.9" width="0.7" height="1.6" fill="#c8c8c8"/><rect x="6.3" y="5.9" width="0.7" height="1.6" fill="#c8c8c8"/><rect x="8.5" y="5.9" width="0.7" height="1.6" fill="#c8c8c8"/><rect x="10.7" y="5.9" width="0.7" height="1.6" fill="#c8c8c8"/><rect x="12.9" y="5.9" width="0.7" height="1.6" fill="#c8c8c8"/><rect x="14.8" y="5.9" width="0.7" height="1.6" fill="#c8c8c8"/><path d="M10.9 0.5 H13 L15.5 2.5 L13 4.5 H10.9 L12.3 2.5 Z" fill="#eef3fa" stroke="#6a90d4" stroke-width="0.85"/></svg>
<div class="t" style="left:22.30000000000001px;top:420.03px;font-size:12px;line-height:16px;font-weight:normal;color:#000;letter-spacing:0.1px">Maximum Payload Size Supported:</div>
<div class="t" style="left:231.5px;top:420.03px;font-size:12px;line-height:16px;font-weight:normal;color:#000;letter-spacing:0.1px">256 bytes</div>
<svg class="r" style="left:4px;top:442px;" width="16" height="8" viewBox="0 0 16 8"><rect x="0.3" y="0" width="1" height="5" fill="#4a4a4a"/><rect x="0.3" y="0" width="3.3" height="0.9" fill="#4a4a4a"/><rect x="0.3" y="2.1" width="3.3" height="0.9" fill="#4a4a4a"/><rect x="2.9" y="0" width="0.9" height="3" fill="#4a4a4a"/><rect x="4.8" y="0" width="3.3" height="0.9" fill="#4a4a4a"/><rect x="4.8" y="4.1" width="3.3" height="0.9" fill="#4a4a4a"/><rect x="4.8" y="0" width="1" height="5" fill="#4a4a4a"/><rect x="9" y="0" width="1" height="5" fill="#4a4a4a"/><rect x="0" y="5.4" width="16" height="2.6" fill="#3a3a3a"/><rect x="1.8" y="5.9" width="0.7" height="1.6" fill="#c8c8c8"/><rect x="4.1" y="5.9" width="0.7" height="1.6" fill="#c8c8c8"/><rect x="6.3" y="5.9" width="0.7" height="1.6" fill="#c8c8c8"/><rect x="8.5" y="5.9" width="0.7" height="1.6" fill="#c8c8c8"/><rect x="10.7" y="5.9" width="0.7" height="1.6" fill="#c8c8c8"/><rect x="12.9" y="5.9" width="0.7" height="1.6" fill="#c8c8c8"/><rect x="14.8" y="5.9" width="0.7" height="1.6" fill="#c8c8c8"/><path d="M10.9 0.5 H13 L15.5 2.5 L13 4.5 H10.9 L12.3 2.5 Z" fill="#eef3fa" stroke="#6a90d4" stroke-width="0.85"/></svg>
<div class="t" style="left:22.30000000000001px;top:439.03px;font-size:12px;line-height:16px;font-weight:normal;color:#000;letter-spacing:0.1px">Maximum Payload Size:</div>
<div class="t" style="left:231.5px;top:439.03px;font-size:12px;line-height:16px;font-weight:normal;color:#000;letter-spacing:0.1px">256 bytes</div>
</div>
<div class="r" style="left:1px;top:584px;width:906px;height:21px;background:#f0f0f0"></div>
<div class="r" style="left:1px;top:585px;width:906px;height:1px;background:#fcfcfc"></div>
<div class="r" style="left:1px;top:586px;width:906px;height:1px;background:#d8d8d8"></div>
<div class="r" style="left:3px;top:585px;width:885px;height:20px;overflow:hidden">
<div class="t" style="left:0.6px;top:4.60px;font-size:11.8px;line-height:15px;font-weight:normal;color:#000;letter-spacing:-0.21px">DESKTOP-50OFNDJ -&gt; Bus -&gt; PCI Bus #0 -&gt; Intel Haswell-EN/EP/EP 4S/EX IIO - PCI Express Root Port 2a (x16/x8/x4) -&gt; PCI Express x8 Bus #3 -&gt; AJA Video, Device ID: EB0B</div>
</div>
<div class="r" style="left:902px;top:596px;width:2px;height:2px;background:#b0b0b0"></div>
<div class="r" style="left:899px;top:599px;width:2px;height:2px;background:#b0b0b0"></div>
<div class="r" style="left:902px;top:599px;width:2px;height:2px;background:#b0b0b0"></div>
<div class="r" style="left:896px;top:602px;width:2px;height:2px;background:#b0b0b0"></div>
<div class="r" style="left:899px;top:602px;width:2px;height:2px;background:#b0b0b0"></div>
<div class="r" style="left:902px;top:602px;width:2px;height:2px;background:#b0b0b0"></div>
<svg class="r" style="left:0;top:0" width="908" height="606" viewBox="0 0 908 606"><path d="M620 263.5 C630.8 263.5 637.7 264.0 650 264.9 C662.3 265.8 679.3 266.7 694 268.7 C708.7 270.7 723.3 273.2 738 277 C752.7 280.8 769.2 286.2 782 291.3 C794.8 296.4 806.5 302.2 815 307.9 C823.5 313.6 828.9 319.5 833 325.5 C837.1 331.5 840.4 337.2 839.5 344 C838.6 350.8 833.4 359.3 827.5 366.4 C821.6 373.4 814.9 380.0 804.4 386.3 C793.9 392.6 779.6 399.3 764.7 404.4 C749.8 409.4 732.8 413.5 715.2 416.6 C697.6 419.7 675.5 422.1 659 423.2 C642.5 424.3 634.2 423.8 616 423.2 C597.8 422.6 570.0 422.1 550 419.6 C530.0 417.1 510.6 412.0 495.7 408.4 C480.8 404.8 470.8 401.5 460.5 397.8 C450.2 394.1 441.6 390.6 434 386.4 C426.4 382.1 420.0 377.0 414.7 372.3 C409.4 367.6 405.2 362.9 402.3 358.2 C399.4 353.5 397.9 348.4 397.5 344 C397.1 339.6 397.4 336.6 400 332 C402.6 327.4 408.1 321.3 412.9 316.4 C417.7 311.4 422.3 306.4 428.8 302.3 C435.3 298.2 443.5 294.9 451.7 291.7 C459.9 288.5 467.7 285.9 478 283 C488.3 280.1 501.3 276.5 513.3 274 C525.3 271.5 538.0 269.5 550 268 C562.0 266.5 573.3 265.8 585 265 C596.7 264.2 609.2 263.5 620 263.5 Z" fill="none" stroke="#ed1c24" stroke-width="5.2" shape-rendering="crispEdges"/></svg>
</body></html>
